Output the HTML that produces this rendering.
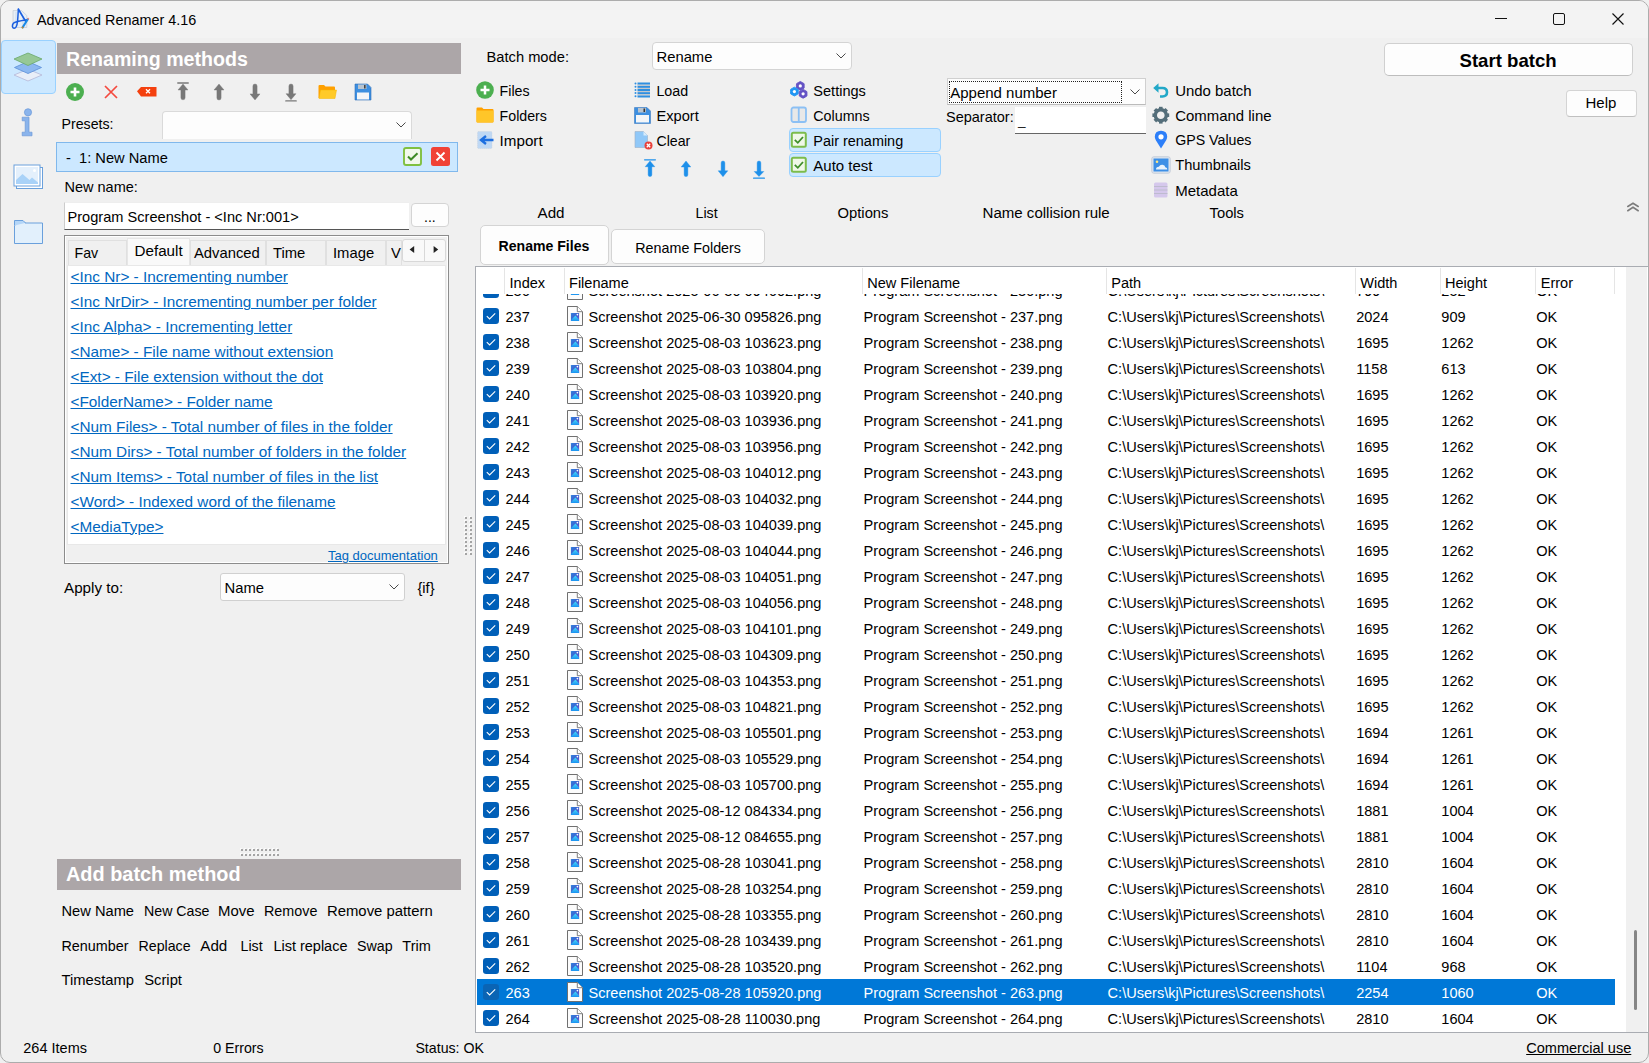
<!DOCTYPE html><html><head><meta charset="utf-8"><style>
*{margin:0;padding:0;box-sizing:border-box}
html,body{width:1649px;height:1063px;overflow:hidden;background:#f0f0f0}
body{font-family:"Liberation Sans",sans-serif;color:#000;position:relative}
.t{position:absolute;white-space:nowrap;line-height:1.117}
.r{position:absolute}
svg{position:absolute;overflow:visible}
.lnk{color:#0067c0;text-decoration:underline;text-decoration-thickness:1px;text-underline-offset:1px}
</style></head><body>
<div class="r" style="left:0px;top:0px;width:1649px;height:1063px;border:1px solid #acacac;border-radius:10px;background:#f0f0f0;overflow:hidden"></div>
<div class="r" style="left:1px;top:1px;width:1647px;height:37px;background:#f3f3f3;border-radius:9px 9px 0 0"></div>
<svg style="left:8px;top:6px;" width="26" height="26" viewBox="0 0 26 26"><path d="M5 4.6 H13.5 L18.8 9.5 V21.5 H5 Z" fill="#e8eff6" stroke="#c6ced8" stroke-width="0.8"/><path d="M8 6 V20 M15 10 V20" stroke="#d4e2f0" stroke-width="1.4"/><path d="M10.4 3.2 C10 8 9.9 12.5 9.5 15.5 C9.1 19.5 8.2 22.4 6 22.3 C4 22.2 3.9 19.2 5.4 17.3 C7 15.4 11.5 14.8 19.8 13.6" fill="none" stroke="#1b5fe0" stroke-width="1.5" stroke-linecap="round"/><path d="M10.4 3.2 L17.8 15.6" fill="none" stroke="#1b5fe0" stroke-width="1.7" stroke-linecap="round"/><path d="M20 13 L14.6 21.4" stroke="#1a8ae8" stroke-width="2" stroke-linecap="round"/><circle cx="14.5" cy="21.5" r="0.9" fill="#c88a20"/><circle cx="20.3" cy="12.7" r="0.9" fill="#f08a80"/></svg>
<div class="t" style="left:37px;top:12px;font-size:14.4px;line-height:16px;">Advanced Renamer 4.16</div>
<svg style="left:1490px;top:10px;" width="140" height="20" viewBox="0 0 140 20"><path d="M5 8.5 H17" stroke="#111" stroke-width="1"/>
<rect x="63.5" y="3.5" width="11" height="11" rx="1.5" fill="none" stroke="#111" stroke-width="1"/>
<path d="M122.5 3.5 L133.5 14.5 M133.5 3.5 L122.5 14.5" stroke="#111" stroke-width="1.15"/></svg>
<div class="r" style="left:1px;top:40px;width:55px;height:54px;background:#cce8ff;border:1px solid #99d1ff;border-radius:4px"></div>
<svg style="left:12px;top:50px;" width="32" height="34" viewBox="0 0 32 34"><path d="M2 25 L16 19.2 L30 25 L16 31 Z" fill="#e8eef8" stroke="#b4b8d8" stroke-width="0.8"/>
<path d="M2.5 17.5 L16 11.5 L29.5 17.5 L16 23.5 Z" fill="#8cb8f0" stroke="#5a8ed8" stroke-width="0.8"/>
<path d="M2 9 L16 3 L30 9 L16 15.5 Z" fill="#96c896" stroke="#6aa86a" stroke-width="0.8"/></svg>
<svg style="left:20px;top:106px;" width="16" height="32" viewBox="0 0 16 32"><circle cx="8" cy="6.3" r="3.6" fill="#8ab4ec" stroke="#6a98d8" stroke-width="0.7"/>
<path d="M2.2 11.2 H9 V26.2 H12 V29.8 H2.2 V26.2 H5.2 V14.8 H2.2 Z" fill="#8ab4ec" stroke="#6a98d8" stroke-width="0.7"/></svg>
<svg style="left:12px;top:163px;" width="32" height="28" viewBox="0 0 32 28"><rect x="4.5" y="4.5" width="26" height="21" fill="#fff" stroke="#6aa0dc" stroke-width="1"/>
<rect x="2" y="2" width="26" height="21" fill="#fff" stroke="#6aa0dc" stroke-width="1"/>
<rect x="4" y="4" width="22" height="17" fill="#e4f0fc"/>
<path d="M4 20 L4 17 L10.5 11 L17.5 17 L20 14.5 L26 19.5 L26 21 L4 21 Z" fill="#a9d2f8"/>
<circle cx="22.5" cy="7.5" r="1.5" fill="#fff"/></svg>
<svg style="left:12px;top:218px;" width="33" height="28" viewBox="0 0 33 28"><path d="M2.5 2.5 H11 L13.5 5 L13.5 7.5 H2.5 Z" fill="#b4d6f8" stroke="#6aa0dc" stroke-width="1"/>
<path d="M2.5 7.5 V25.5 H30.5 V5 H13 " fill="#e2f0fc" stroke="#6aa0dc" stroke-width="1"/></svg>
<div class="r" style="left:57px;top:43px;width:404px;height:31px;background:#aca6a8"></div>
<div class="t" style="left:66px;top:48px;font-size:19.6px;line-height:22px;color:#fff;font-weight:bold;">Renaming methods</div>
<svg style="left:64px;top:81px;" width="22" height="22" viewBox="0 0 22 22"><circle cx="11" cy="11" r="9" fill="#4caf50"/><path d="M11 6.5 V15.5 M6.5 11 H15.5" stroke="#fff" stroke-width="2.6"/></svg>
<svg style="left:103px;top:84px;" width="16" height="16" viewBox="0 0 16 16"><path d="M2 2 L14 14 M14 2 L2 14" stroke="#f44a3f" stroke-width="1.7"/></svg>
<svg style="left:136px;top:86px;" width="22" height="12" viewBox="0 0 22 12"><path d="M1 5.2 L5 1 H20.5 V10.5 H5 Z" fill="#f4400e"/><path d="M10 3.3 L14 7.3 M14 3.3 L10 7.3" stroke="#fff" stroke-width="1.3"/></svg>
<svg style="left:175px;top:79.9px;" width="16" height="23" viewBox="0 0 16 23"><path d="M8.00 4.00 L13.00 10.00 L10.10 10.00 L10.10 17.70 Q10.10 19.80 8.00 19.80 Q5.90 19.80 5.90 17.70 L5.90 10.00 L3.00 10.00 Z" fill="#787878" stroke="#787878" stroke-width="0.4" stroke-linejoin="round"/><path d="M2.80 2.90 H13.20" stroke="#787878" stroke-width="1.5" stroke-linecap="round"/></svg>
<svg style="left:211px;top:79.7px;" width="16" height="24" viewBox="0 0 16 24"><path d="M8.00 4.00 L13.00 10.00 L10.10 10.00 L10.10 17.90 Q10.10 20.00 8.00 20.00 Q5.90 20.00 5.90 17.90 L5.90 10.00 L3.00 10.00 Z" fill="#787878" stroke="#787878" stroke-width="0.4" stroke-linejoin="round"/></svg>
<svg style="left:247px;top:80.3px;" width="16" height="23" viewBox="0 0 16 23"><path d="M8.00 19.90 L13.00 13.90 L10.10 13.90 L10.10 6.10 Q10.10 4.00 8.00 4.00 Q5.90 4.00 5.90 6.10 L5.90 13.90 L3.00 13.90 Z" fill="#787878" stroke="#787878" stroke-width="0.4" stroke-linejoin="round"/></svg>
<svg style="left:283px;top:80.3px;" width="16" height="23" viewBox="0 0 16 23"><path d="M8.00 19.70 L13.00 13.70 L10.10 13.70 L10.10 6.10 Q10.10 4.00 8.00 4.00 Q5.90 4.00 5.90 6.10 L5.90 13.70 L3.00 13.70 Z" fill="#787878" stroke="#787878" stroke-width="0.4" stroke-linejoin="round"/><path d="M2.80 20.90 H13.20" stroke="#787878" stroke-width="1.3" stroke-linecap="round"/></svg>
<svg style="left:318px;top:84px;" width="20" height="16" viewBox="0 0 20 16"><path d="M0.5 2 Q0.5 1 1.5 1 H6 L7.5 2.5 H16 Q17 2.5 17 3.5 V14 H0.5 Z" fill="#ffa000"/><path d="M2.5 6 H18.5 L17 14.5 H1 Z" fill="#ffca28" stroke="#f5b400" stroke-width="0.5"/></svg>
<svg style="left:354px;top:83px;" width="18" height="18" viewBox="0 0 18 18"><path d="M1 1 H13.5 L17 4.5 V17 H1 Z" fill="#3d8fe0" stroke="#2f6fb8" stroke-width="0.6"/><rect x="4" y="1.5" width="8.5" height="4.5" fill="#b8c4d0"/><rect x="10" y="2" width="1.6" height="3.5" fill="#444"/><rect x="3" y="9.5" width="12" height="7" fill="#f4f6f8"/></svg>
<div class="t" style="left:61.5px;top:116px;font-size:14.2px;line-height:16px;">Presets:</div>
<div class="r" style="left:162px;top:111px;width:250px;height:28px;background:#fdfdfd;border:1px solid #dadada;border-bottom:none;border-radius:4px 4px 0 0"></div>
<svg style="left:395px;top:121px;" width="12" height="8" viewBox="0 0 12 8"><path d="M1.5 1.5 L6 6 L10.5 1.5" fill="none" stroke="#4a4a4a" stroke-width="1"/></svg>
<div class="r" style="left:56px;top:142px;width:402px;height:30px;background:#cce8ff;border:1px solid #80b8ec"></div>
<div class="t" style="left:66px;top:150px;font-size:14.67px;line-height:16px;">-&nbsp;&nbsp;1: New Name</div>
<svg style="left:402px;top:146px;" width="22" height="22" viewBox="0 0 22 22"><rect x="2" y="2" width="17" height="17" rx="2" fill="#f2f8ec" stroke="#80c040" stroke-width="1.9"/><path d="M6 10.5 L9 13.5 L15.5 7.2" fill="none" stroke="#3e8a26" stroke-width="2"/></svg>
<svg style="left:430px;top:146px;" width="22" height="22" viewBox="0 0 22 22"><rect x="1" y="1" width="19" height="19" rx="2.5" fill="#f04236"/><path d="M6.5 6.5 L14.5 14.5 M14.5 6.5 L6.5 14.5" stroke="#fff" stroke-width="1.8"/></svg>
<div class="t" style="left:64.5px;top:179px;font-size:14.51px;line-height:16px;">New name:</div>
<div class="r" style="left:64px;top:202px;width:345px;height:28px;background:#fff;border-bottom:1px solid #555;border-left:1px solid #ccc;border-top:1px solid #eee"></div>
<div class="t" style="left:67.5px;top:209px;font-size:14.6px;line-height:16px;">Program Screenshot - &lt;Inc Nr:001&gt;</div>
<div class="r" style="left:411px;top:203px;width:38px;height:24px;background:#fdfdfd;border:1px solid #d4d4d4;border-radius:4px"></div>
<div class="t" style="left:424px;top:209px;font-size:14px;line-height:16px;">...</div>
<div class="r" style="left:64px;top:235px;width:385px;height:329px;border:1px solid #8c8c8c;background:#f0f0f0"></div>
<div class="r" style="left:65px;top:236px;width:383px;height:327px;border:1px solid #fff;"></div>
<div class="r" style="left:68px;top:239.5px;width:59px;height:25.5px;background:#f0f0f0;border:1px solid #e0e0e0;border-bottom:none"></div>
<div class="t" style="left:74.5px;top:245px;font-size:14.2px;line-height:16px;">Fav</div>
<div class="r" style="left:127px;top:238px;width:63px;height:27px;background:#f9f9f9;border:1px solid #e6e6e6;border-bottom:none"></div>
<div class="t" style="left:134.5px;top:242px;font-size:15.2px;line-height:17px;">Default</div>
<div class="r" style="left:190px;top:239.5px;width:76px;height:25.5px;background:#f0f0f0;border:1px solid #e0e0e0;border-bottom:none"></div>
<div class="t" style="left:194px;top:245px;font-size:14.8px;line-height:16px;">Advanced</div>
<div class="r" style="left:266px;top:239.5px;width:60px;height:25.5px;background:#f0f0f0;border:1px solid #e0e0e0;border-bottom:none"></div>
<div class="t" style="left:273px;top:245px;font-size:14.8px;line-height:16px;">Time</div>
<div class="r" style="left:326px;top:239.5px;width:60px;height:25.5px;background:#f0f0f0;border:1px solid #e0e0e0;border-bottom:none"></div>
<div class="t" style="left:333px;top:245px;font-size:14.8px;line-height:16px;">Image</div>
<div class="r" style="left:386px;top:239.5px;width:16px;height:25.5px;background:#f0f0f0;border:1px solid #e0e0e0;border-bottom:none"></div>
<div class="t" style="left:391px;top:245px;font-size:14.8px;line-height:16px;overflow:hidden;width:11px;">V</div>
<div class="r" style="left:402px;top:239px;width:44px;height:23px;background:#f9f9f9;border:1px solid #d8d8d8;border-radius:3px"></div>
<div class="r" style="left:424px;top:239px;width:1px;height:22px;background:#d8d8d8"></div>
<svg style="left:402px;top:239px;" width="44" height="22" viewBox="0 0 44 22"><path d="M12.2 7 L7.6 10.5 L12.2 14 Z" fill="#222"/><path d="M31.6 7 L36.2 10.5 L31.6 14 Z" fill="#222"/></svg>
<div class="r" style="left:67px;top:265px;width:379px;height:280px;background:#fff;border:1px solid #e8e8e8"></div>
<div class="t lnk" style="left:70.5px;top:268px;font-size:15.35px;line-height:17px;">&lt;Inc Nr&gt; - Incrementing number</div>
<div class="t lnk" style="left:70.5px;top:293px;font-size:15.35px;line-height:17px;">&lt;Inc NrDir&gt; - Incrementing number per folder</div>
<div class="t lnk" style="left:70.5px;top:318px;font-size:15.35px;line-height:17px;">&lt;Inc Alpha&gt; - Incrementing letter</div>
<div class="t lnk" style="left:70.5px;top:343px;font-size:15.35px;line-height:17px;">&lt;Name&gt; - File name without extension</div>
<div class="t lnk" style="left:70.5px;top:368px;font-size:15.35px;line-height:17px;">&lt;Ext&gt; - File extension without the dot</div>
<div class="t lnk" style="left:70.5px;top:393px;font-size:15.35px;line-height:17px;">&lt;FolderName&gt; - Folder name</div>
<div class="t lnk" style="left:70.5px;top:418px;font-size:15.35px;line-height:17px;">&lt;Num Files&gt; - Total number of files in the folder</div>
<div class="t lnk" style="left:70.5px;top:443px;font-size:15.35px;line-height:17px;">&lt;Num Dirs&gt; - Total number of folders in the folder</div>
<div class="t lnk" style="left:70.5px;top:468px;font-size:15.35px;line-height:17px;">&lt;Num Items&gt; - Total number of files in the list</div>
<div class="t lnk" style="left:70.5px;top:493px;font-size:15.35px;line-height:17px;">&lt;Word&gt; - Indexed word of the filename</div>
<div class="t lnk" style="left:70.5px;top:518px;font-size:15.35px;line-height:17px;">&lt;MediaType&gt;</div>
<div class="t lnk" style="left:328px;top:548px;font-size:13px;line-height:15px;">Tag documentation</div>
<div class="t" style="left:64px;top:579px;font-size:15.2px;line-height:17px;">Apply to:</div>
<div class="r" style="left:220px;top:573px;width:185px;height:28px;background:#fdfdfd;border:1px solid #d0d0d0;border-radius:3px"></div>
<div class="t" style="left:224.5px;top:580px;font-size:14.8px;line-height:16px;">Name</div>
<svg style="left:388px;top:583px;" width="12" height="8" viewBox="0 0 12 8"><path d="M1.5 1.5 L6 6 L10.5 1.5" fill="none" stroke="#4a4a4a" stroke-width="1"/></svg>
<div class="t" style="left:417.5px;top:580px;font-size:14.6px;line-height:16px;">{if}</div>
<div class="r" style="left:464px;top:516px;width:2px;height:2px;background:#fbfbfb"></div><div class="r" style="left:465px;top:517px;width:2px;height:2px;background:#a4a4a4"></div><div class="r" style="left:469px;top:516px;width:2px;height:2px;background:#fbfbfb"></div><div class="r" style="left:470px;top:517px;width:2px;height:2px;background:#a4a4a4"></div><div class="r" style="left:464px;top:520px;width:2px;height:2px;background:#fbfbfb"></div><div class="r" style="left:465px;top:521px;width:2px;height:2px;background:#a4a4a4"></div><div class="r" style="left:469px;top:520px;width:2px;height:2px;background:#fbfbfb"></div><div class="r" style="left:470px;top:521px;width:2px;height:2px;background:#a4a4a4"></div><div class="r" style="left:464px;top:524px;width:2px;height:2px;background:#fbfbfb"></div><div class="r" style="left:465px;top:525px;width:2px;height:2px;background:#a4a4a4"></div><div class="r" style="left:469px;top:524px;width:2px;height:2px;background:#fbfbfb"></div><div class="r" style="left:470px;top:525px;width:2px;height:2px;background:#a4a4a4"></div><div class="r" style="left:464px;top:528px;width:2px;height:2px;background:#fbfbfb"></div><div class="r" style="left:465px;top:529px;width:2px;height:2px;background:#a4a4a4"></div><div class="r" style="left:469px;top:528px;width:2px;height:2px;background:#fbfbfb"></div><div class="r" style="left:470px;top:529px;width:2px;height:2px;background:#a4a4a4"></div><div class="r" style="left:464px;top:532px;width:2px;height:2px;background:#fbfbfb"></div><div class="r" style="left:465px;top:533px;width:2px;height:2px;background:#a4a4a4"></div><div class="r" style="left:469px;top:532px;width:2px;height:2px;background:#fbfbfb"></div><div class="r" style="left:470px;top:533px;width:2px;height:2px;background:#a4a4a4"></div><div class="r" style="left:464px;top:536px;width:2px;height:2px;background:#fbfbfb"></div><div class="r" style="left:465px;top:537px;width:2px;height:2px;background:#a4a4a4"></div><div class="r" style="left:469px;top:536px;width:2px;height:2px;background:#fbfbfb"></div><div class="r" style="left:470px;top:537px;width:2px;height:2px;background:#a4a4a4"></div><div class="r" style="left:464px;top:540px;width:2px;height:2px;background:#fbfbfb"></div><div class="r" style="left:465px;top:541px;width:2px;height:2px;background:#a4a4a4"></div><div class="r" style="left:469px;top:540px;width:2px;height:2px;background:#fbfbfb"></div><div class="r" style="left:470px;top:541px;width:2px;height:2px;background:#a4a4a4"></div><div class="r" style="left:464px;top:544px;width:2px;height:2px;background:#fbfbfb"></div><div class="r" style="left:465px;top:545px;width:2px;height:2px;background:#a4a4a4"></div><div class="r" style="left:469px;top:544px;width:2px;height:2px;background:#fbfbfb"></div><div class="r" style="left:470px;top:545px;width:2px;height:2px;background:#a4a4a4"></div><div class="r" style="left:464px;top:548px;width:2px;height:2px;background:#fbfbfb"></div><div class="r" style="left:465px;top:549px;width:2px;height:2px;background:#a4a4a4"></div><div class="r" style="left:469px;top:548px;width:2px;height:2px;background:#fbfbfb"></div><div class="r" style="left:470px;top:549px;width:2px;height:2px;background:#a4a4a4"></div><div class="r" style="left:464px;top:552px;width:2px;height:2px;background:#fbfbfb"></div><div class="r" style="left:465px;top:553px;width:2px;height:2px;background:#a4a4a4"></div><div class="r" style="left:469px;top:552px;width:2px;height:2px;background:#fbfbfb"></div><div class="r" style="left:470px;top:553px;width:2px;height:2px;background:#a4a4a4"></div>
<div class="r" style="left:240px;top:848px;width:2px;height:2px;background:#fbfbfb"></div><div class="r" style="left:241px;top:849px;width:2px;height:2px;background:#a4a4a4"></div><div class="r" style="left:240px;top:853px;width:2px;height:2px;background:#fbfbfb"></div><div class="r" style="left:241px;top:854px;width:2px;height:2px;background:#a4a4a4"></div><div class="r" style="left:244px;top:848px;width:2px;height:2px;background:#fbfbfb"></div><div class="r" style="left:245px;top:849px;width:2px;height:2px;background:#a4a4a4"></div><div class="r" style="left:244px;top:853px;width:2px;height:2px;background:#fbfbfb"></div><div class="r" style="left:245px;top:854px;width:2px;height:2px;background:#a4a4a4"></div><div class="r" style="left:248px;top:848px;width:2px;height:2px;background:#fbfbfb"></div><div class="r" style="left:249px;top:849px;width:2px;height:2px;background:#a4a4a4"></div><div class="r" style="left:248px;top:853px;width:2px;height:2px;background:#fbfbfb"></div><div class="r" style="left:249px;top:854px;width:2px;height:2px;background:#a4a4a4"></div><div class="r" style="left:252px;top:848px;width:2px;height:2px;background:#fbfbfb"></div><div class="r" style="left:253px;top:849px;width:2px;height:2px;background:#a4a4a4"></div><div class="r" style="left:252px;top:853px;width:2px;height:2px;background:#fbfbfb"></div><div class="r" style="left:253px;top:854px;width:2px;height:2px;background:#a4a4a4"></div><div class="r" style="left:256px;top:848px;width:2px;height:2px;background:#fbfbfb"></div><div class="r" style="left:257px;top:849px;width:2px;height:2px;background:#a4a4a4"></div><div class="r" style="left:256px;top:853px;width:2px;height:2px;background:#fbfbfb"></div><div class="r" style="left:257px;top:854px;width:2px;height:2px;background:#a4a4a4"></div><div class="r" style="left:260px;top:848px;width:2px;height:2px;background:#fbfbfb"></div><div class="r" style="left:261px;top:849px;width:2px;height:2px;background:#a4a4a4"></div><div class="r" style="left:260px;top:853px;width:2px;height:2px;background:#fbfbfb"></div><div class="r" style="left:261px;top:854px;width:2px;height:2px;background:#a4a4a4"></div><div class="r" style="left:264px;top:848px;width:2px;height:2px;background:#fbfbfb"></div><div class="r" style="left:265px;top:849px;width:2px;height:2px;background:#a4a4a4"></div><div class="r" style="left:264px;top:853px;width:2px;height:2px;background:#fbfbfb"></div><div class="r" style="left:265px;top:854px;width:2px;height:2px;background:#a4a4a4"></div><div class="r" style="left:268px;top:848px;width:2px;height:2px;background:#fbfbfb"></div><div class="r" style="left:269px;top:849px;width:2px;height:2px;background:#a4a4a4"></div><div class="r" style="left:268px;top:853px;width:2px;height:2px;background:#fbfbfb"></div><div class="r" style="left:269px;top:854px;width:2px;height:2px;background:#a4a4a4"></div><div class="r" style="left:272px;top:848px;width:2px;height:2px;background:#fbfbfb"></div><div class="r" style="left:273px;top:849px;width:2px;height:2px;background:#a4a4a4"></div><div class="r" style="left:272px;top:853px;width:2px;height:2px;background:#fbfbfb"></div><div class="r" style="left:273px;top:854px;width:2px;height:2px;background:#a4a4a4"></div><div class="r" style="left:276px;top:848px;width:2px;height:2px;background:#fbfbfb"></div><div class="r" style="left:277px;top:849px;width:2px;height:2px;background:#a4a4a4"></div><div class="r" style="left:276px;top:853px;width:2px;height:2px;background:#fbfbfb"></div><div class="r" style="left:277px;top:854px;width:2px;height:2px;background:#a4a4a4"></div>
<div class="r" style="left:57px;top:859px;width:404px;height:31px;background:#aca6a8"></div>
<div class="t" style="left:66px;top:863px;font-size:19.9px;line-height:22px;color:#fff;font-weight:bold;">Add batch method</div>
<div class="t" style="left:61.5px;top:903px;font-size:14.66px;line-height:16px;">New Name</div>
<div class="t" style="left:144px;top:903px;font-size:14.2px;line-height:16px;">New Case</div>
<div class="t" style="left:218px;top:902px;font-size:14.93px;line-height:17px;">Move</div>
<div class="t" style="left:264px;top:903px;font-size:14.34px;line-height:16px;">Remove</div>
<div class="t" style="left:327px;top:903px;font-size:14.87px;line-height:16px;">Remove pattern</div>
<div class="t" style="left:61.5px;top:938px;font-size:14.35px;line-height:16px;">Renumber</div>
<div class="t" style="left:138.5px;top:938px;font-size:14.2px;line-height:16px;">Replace</div>
<div class="t" style="left:200.3px;top:937px;font-size:15.2px;line-height:17px;">Add</div>
<div class="t" style="left:240.5px;top:938px;font-size:14.2px;line-height:16px;">List</div>
<div class="t" style="left:273.4px;top:938px;font-size:14.49px;line-height:16px;">List replace</div>
<div class="t" style="left:357px;top:938px;font-size:14.24px;line-height:16px;">Swap</div>
<div class="t" style="left:402.3px;top:938px;font-size:14.54px;line-height:16px;">Trim</div>
<div class="t" style="left:61.5px;top:972px;font-size:14.77px;line-height:16px;">Timestamp</div>
<div class="t" style="left:144.2px;top:972px;font-size:14.79px;line-height:16px;">Script</div>
<div class="t" style="left:23.3px;top:1040px;font-size:14.51px;line-height:16px;">264 Items</div>
<div class="t" style="left:213.2px;top:1040px;font-size:14.2px;line-height:16px;">0 Errors</div>
<div class="t" style="left:415.4px;top:1040px;font-size:14.2px;line-height:16px;">Status: OK</div>
<div class="t" style="left:1526.2px;top:1040px;font-size:14.56px;line-height:16px;text-decoration:underline;text-decoration-thickness:1px;text-underline-offset:1px;">Commercial use</div>
<div class="t" style="left:486.5px;top:49px;font-size:14.7px;line-height:16px;">Batch mode:</div>
<div class="r" style="left:652px;top:42px;width:200px;height:28px;background:#fdfdfd;border:1px solid #d4d4d4;border-radius:4px"></div>
<div class="t" style="left:656.5px;top:49px;font-size:14.8px;line-height:16px;">Rename</div>
<svg style="left:835px;top:52px;" width="12" height="8" viewBox="0 0 12 8"><path d="M1.5 1.5 L6 6 L10.5 1.5" fill="none" stroke="#4a4a4a" stroke-width="1"/></svg>
<svg style="left:475px;top:80px;" width="20" height="20" viewBox="0 0 20 20"><circle cx="10" cy="10" r="8.8" fill="#4caf50"/><path d="M10 5.5 V14.5 M5.5 10 H14.5" stroke="#fff" stroke-width="2.5"/></svg>
<div class="t" style="left:499.6px;top:83px;font-size:14.2px;line-height:16px;">Files</div>
<svg style="left:476px;top:107px;" width="18" height="16" viewBox="0 0 18 16"><path d="M0.5 1.5 Q0.5 0.5 1.5 0.5 H6 L7.5 2 H16.5 Q17.5 2 17.5 3 V14.5 Q17.5 15.5 16.5 15.5 H1.5 Q0.5 15.5 0.5 14.5 Z" fill="#ffa000"/><path d="M0.5 3.5 H17.5 V14.5 Q17.5 15.5 16.5 15.5 H1.5 Q0.5 15.5 0.5 14.5 Z" fill="#ffc629"/></svg>
<div class="t" style="left:499.6px;top:108px;font-size:14.2px;line-height:16px;">Folders</div>
<svg style="left:477px;top:131px;" width="17" height="18" viewBox="0 0 17 18"><rect x="0.5" y="0.5" width="14.5" height="17" rx="1" fill="#bfd8f4" stroke="#c8d0dc" stroke-width="0.6" stroke-dasharray="1 1"/><path d="M16.5 9 H5.5 M9 5 L4 9 L9 13" fill="none" stroke="#1e6fe0" stroke-width="2.4" stroke-linejoin="miter"/></svg>
<div class="t" style="left:499.6px;top:132px;font-size:15.2px;line-height:17px;">Import</div>
<div class="t" style="left:537.5px;top:204px;font-size:15.2px;line-height:17px;">Add</div>
<svg style="left:634px;top:82px;" width="17" height="17" viewBox="0 0 17 17"><rect x="0.5" y="0.5" width="2" height="2" rx="1" fill="#2f8fe0"/><rect x="3.5" y="0.5" width="12.5" height="2.2" fill="#2f8fe0"/><rect x="0.5" y="3.7" width="2" height="2" rx="1" fill="#2f8fe0"/><rect x="3.5" y="3.7" width="12.5" height="2.2" fill="#2f8fe0"/><rect x="0.5" y="6.9" width="2" height="2" rx="1" fill="#2f8fe0"/><rect x="3.5" y="6.9" width="12.5" height="2.2" fill="#2f8fe0"/><rect x="0.5" y="10.100000000000001" width="2" height="2" rx="1" fill="#2f8fe0"/><rect x="3.5" y="10.100000000000001" width="12.5" height="2.2" fill="#2f8fe0"/><rect x="0.5" y="13.3" width="2" height="2" rx="1" fill="#2f8fe0"/><rect x="3.5" y="13.3" width="12.5" height="2.2" fill="#2f8fe0"/><rect x="3.5" y="2.7" width="12.5" height="1" fill="#c0c4c8"/><rect x="3.5" y="5.9" width="12.5" height="1" fill="#c0c4c8"/><rect x="3.5" y="9.100000000000001" width="12.5" height="1" fill="#c0c4c8"/><rect x="3.5" y="12.3" width="12.5" height="1" fill="#c0c4c8"/></svg>
<div class="t" style="left:656.4px;top:83px;font-size:14.29px;line-height:16px;">Load</div>
<svg style="left:634px;top:107px;" width="17" height="17" viewBox="0 0 17 17"><path d="M0.5 0.5 H13 L16.5 4 V16.5 H0.5 Z" fill="#3d8fe0" stroke="#2f6fb8" stroke-width="0.5"/><rect x="4" y="1" width="8" height="4.5" fill="#b8c4d0"/><rect x="9.5" y="1.5" width="1.6" height="3.5" fill="#333"/><rect x="2" y="8" width="13" height="7.5" fill="#f4f6f8"/></svg>
<div class="t" style="left:656.4px;top:108px;font-size:14.67px;line-height:16px;">Export</div>
<svg style="left:634px;top:130px;" width="20" height="21" viewBox="0 0 20 21"><path d="M1 1.5 H9.5 L13.5 5.5 V17.5 H1 Z" fill="#90c8f8" stroke="#9ab0c8" stroke-width="0.6"/><path d="M9.5 1.5 V5.5 H13.5" fill="#d8ecfc"/><circle cx="14.5" cy="15.5" r="4" fill="#e8403a"/><path d="M12.8 13.8 L16.2 17.2 M16.2 13.8 L12.8 17.2" stroke="#fff" stroke-width="1.3"/></svg>
<div class="t" style="left:656.4px;top:133px;font-size:14.2px;line-height:16px;">Clear</div>
<svg style="left:642px;top:156.8px;" width="16" height="23" viewBox="0 0 16 23"><path d="M8.00 4.00 L12.80 9.70 L9.85 9.70 L9.85 17.65 Q9.85 19.50 8.00 19.50 Q6.15 19.50 6.15 17.65 L6.15 9.70 L3.20 9.70 Z" fill="#1e90ea" stroke="#1e90ea" stroke-width="0.4" stroke-linejoin="round"/><path d="M2.60 2.80 H13.40" stroke="#1e90ea" stroke-width="1.3" stroke-linecap="round"/></svg>
<svg style="left:678px;top:156.7px;" width="16" height="23" viewBox="0 0 16 23"><path d="M8.00 4.00 L12.80 10.00 L9.85 10.00 L9.85 17.75 Q9.85 19.60 8.00 19.60 Q6.15 19.60 6.15 17.75 L6.15 10.00 L3.20 10.00 Z" fill="#1e90ea" stroke="#1e90ea" stroke-width="0.4" stroke-linejoin="round"/></svg>
<svg style="left:715px;top:157.2px;" width="16" height="23" viewBox="0 0 16 23"><path d="M8.00 19.70 L12.80 13.80 L9.85 13.80 L9.85 5.85 Q9.85 4.00 8.00 4.00 Q6.15 4.00 6.15 5.85 L6.15 13.80 L3.20 13.80 Z" fill="#1e90ea" stroke="#1e90ea" stroke-width="0.4" stroke-linejoin="round"/></svg>
<svg style="left:751px;top:157.2px;" width="16" height="23" viewBox="0 0 16 23"><path d="M8.00 19.50 L12.80 14.50 L9.85 14.50 L9.85 5.85 Q9.85 4.00 8.00 4.00 Q6.15 4.00 6.15 5.85 L6.15 14.50 L3.20 14.50 Z" fill="#1e90ea" stroke="#1e90ea" stroke-width="0.4" stroke-linejoin="round"/><path d="M2.60 21.20 H13.40" stroke="#1e90ea" stroke-width="1.2" stroke-linecap="round"/></svg>
<div class="t" style="left:695.5px;top:205px;font-size:14.2px;line-height:16px;">List</div>
<svg style="left:789px;top:80px;" width="20" height="20" viewBox="0 0 20 20"><polygon points="11.30,10.30 9.35,9.28 7.49,8.10 7.40,5.90 7.49,3.70 9.35,2.52 11.30,1.50 13.25,2.52 15.11,3.70 15.20,5.90 15.11,8.10 13.25,9.28" fill="#6452c4" stroke="#6452c4" stroke-width="0.9" stroke-linejoin="round"/><circle cx="11.3" cy="5.9" r="1.6" fill="#fff"/><polygon points="5.40,16.00 3.45,14.98 1.59,13.80 1.50,11.60 1.59,9.40 3.45,8.22 5.40,7.20 7.35,8.22 9.21,9.40 9.30,11.60 9.21,13.80 7.35,14.98" fill="#2196f3" stroke="#2196f3" stroke-width="0.9" stroke-linejoin="round"/><circle cx="5.4" cy="11.6" r="1.6" fill="#fff"/><polygon points="14.10,18.20 12.15,17.18 10.29,16.00 10.20,13.80 10.29,11.60 12.15,10.42 14.10,9.40 16.05,10.42 17.91,11.60 18.00,13.80 17.91,16.00 16.05,17.18" fill="#6452c4" stroke="#6452c4" stroke-width="0.9" stroke-linejoin="round"/><circle cx="14.1" cy="13.8" r="1.6" fill="#fff"/></svg>
<div class="t" style="left:813.3px;top:83px;font-size:14.55px;line-height:16px;">Settings</div>
<svg style="left:790px;top:106px;" width="18" height="18" viewBox="0 0 18 18"><rect x="1.5" y="1.5" width="14.5" height="14.5" rx="2" fill="#e8e8e8" stroke="#8cc0f4" stroke-width="1.8"/><path d="M8.75 2 V16" stroke="#8cc0f4" stroke-width="1.8"/></svg>
<div class="t" style="left:813.3px;top:108px;font-size:14.3px;line-height:16px;">Columns</div>
<div class="r" style="left:789px;top:128px;width:152px;height:24px;background:#cce8ff;border:1px solid #99d1ff;border-radius:4px"></div>
<div class="r" style="left:789px;top:153px;width:152px;height:24px;background:#cce8ff;border:1px solid #99d1ff;border-radius:4px"></div>
<svg style="left:790px;top:131px;" width="18" height="18" viewBox="0 0 18 18"><rect x="1.8" y="1.8" width="14" height="14" rx="1.5" fill="#f0f8e8" stroke="#7cbc4c" stroke-width="2"/><path d="M4.8 8.8 L7.8 11.8 L13 6" fill="none" stroke="#3e8e2a" stroke-width="1.8"/></svg>
<svg style="left:790px;top:156px;" width="18" height="18" viewBox="0 0 18 18"><rect x="1.8" y="1.8" width="14" height="14" rx="1.5" fill="#f0f8e8" stroke="#7cbc4c" stroke-width="2"/><path d="M4.8 8.8 L7.8 11.8 L13 6" fill="none" stroke="#3e8e2a" stroke-width="1.8"/></svg>
<div class="t" style="left:813.3px;top:133px;font-size:14.44px;line-height:16px;">Pair renaming</div>
<div class="t" style="left:813.3px;top:157px;font-size:15.0px;line-height:17px;">Auto test</div>
<div class="t" style="left:837.5px;top:205px;font-size:14.8px;line-height:16px;">Options</div>
<div class="r" style="left:947px;top:78px;width:199px;height:27px;background:#fdfdfd;border:1px solid #d0d0d0;border-bottom-color:#bbb"></div>
<div class="r" style="left:949px;top:81px;width:173px;height:22px;border:1px dotted #222"></div>
<div class="t" style="left:950.2px;top:84px;font-size:15.0px;line-height:17px;">Append number</div>
<svg style="left:1129px;top:88px;" width="12" height="8" viewBox="0 0 12 8"><path d="M1.5 1.5 L6 6 L10.5 1.5" fill="none" stroke="#4a4a4a" stroke-width="1"/></svg>
<div class="t" style="left:946px;top:109px;font-size:14.5px;line-height:16px;">Separator:</div>
<div class="r" style="left:1015px;top:106px;width:131px;height:28px;background:#fff;border-bottom:1px solid #666;border-top:1px solid #eee"></div>
<div class="t" style="left:1018px;top:113px;font-size:13.5px;line-height:15px;">_</div>
<div class="t" style="left:982.5px;top:204px;font-size:15.07px;line-height:17px;">Name collision rule</div>
<svg style="left:1152px;top:82px;" width="18" height="16" viewBox="0 0 18 16"><path d="M4.5 6 H10.5 Q15 6 15 10.2 Q15 14.5 10.5 14.5 H8" fill="none" stroke="#22a8c8" stroke-width="2.6"/><path d="M1.2 6 L6.5 1.2 L6.5 10.8 Z" fill="#22a8c8"/></svg>
<div class="t" style="left:1175.2px;top:82px;font-size:14.94px;line-height:17px;">Undo batch</div>
<svg style="left:1151px;top:106px;" width="20" height="19" viewBox="0 0 20 19"><g transform="translate(9.8,9.2)"><circle r="5.5" fill="none" stroke="#546e7a" stroke-width="3.4"/><rect x="-1.8" y="-8.4" width="3.6" height="3.6" fill="#546e7a" transform="rotate(0)"/><rect x="-1.8" y="-8.4" width="3.6" height="3.6" fill="#546e7a" transform="rotate(45)"/><rect x="-1.8" y="-8.4" width="3.6" height="3.6" fill="#546e7a" transform="rotate(90)"/><rect x="-1.8" y="-8.4" width="3.6" height="3.6" fill="#546e7a" transform="rotate(135)"/><rect x="-1.8" y="-8.4" width="3.6" height="3.6" fill="#546e7a" transform="rotate(180)"/><rect x="-1.8" y="-8.4" width="3.6" height="3.6" fill="#546e7a" transform="rotate(225)"/><rect x="-1.8" y="-8.4" width="3.6" height="3.6" fill="#546e7a" transform="rotate(270)"/><rect x="-1.8" y="-8.4" width="3.6" height="3.6" fill="#546e7a" transform="rotate(315)"/></g></svg>
<div class="t" style="left:1175.2px;top:107px;font-size:14.95px;line-height:17px;">Command line</div>
<svg style="left:1154px;top:130px;" width="14" height="19" viewBox="0 0 14 19"><path d="M7 18.5 L2 10.5 Q0.8 8.5 0.8 6.8 Q0.8 0.8 7 0.8 Q13.2 0.8 13.2 6.8 Q13.2 8.5 12 10.5 Z" fill="#2d7ff9"/><circle cx="7" cy="6.8" r="2.6" fill="#fff"/></svg>
<div class="t" style="left:1175.2px;top:132px;font-size:14.2px;line-height:16px;">GPS Values</div>
<svg style="left:1151px;top:156px;" width="20" height="18" viewBox="0 0 20 18"><rect x="0.8" y="0.8" width="18.4" height="16.4" rx="2" fill="#dfe6f0" stroke="#c4ccd8" stroke-width="1"/><rect x="2.5" y="2.5" width="15" height="13" fill="#3d8fe6"/><circle cx="6" cy="5.8" r="1.3" fill="#ffe680"/><path d="M5 13.5 Q5 10.8 7.8 10.8 Q9 8.5 11.5 8.8 Q14 9 14.3 11.2 Q16.5 11.5 16.3 13.5 Z" fill="#e8f2fc"/></svg>
<div class="t" style="left:1175.2px;top:157px;font-size:14.66px;line-height:16px;">Thumbnails</div>
<svg style="left:1153px;top:182px;" width="16" height="16" viewBox="0 0 16 16"><rect x="1" y="0.5" width="13.5" height="15" rx="1.5" fill="#d5c8ec"/><path d="M1 4.5 H14.5 M1 8 H14.5 M1 11.5 H14.5" stroke="#b8b8c8" stroke-width="0.8"/></svg>
<div class="t" style="left:1175.2px;top:182px;font-size:15.0px;line-height:17px;">Metadata</div>
<div class="t" style="left:1209.6px;top:205px;font-size:14.73px;line-height:16px;">Tools</div>
<svg style="left:1625px;top:199px;" width="16" height="14" viewBox="0 0 16 14"><path d="M2.8 7.5 L8 4.2 L13.2 7.5 M2.8 11.75 L8 8.3 L13.2 11.75" fill="none" stroke="#7c7c7c" stroke-width="1.6" stroke-linecap="round"/></svg>
<div class="r" style="left:1384px;top:43px;width:249px;height:33px;background:#fdfdfd;border:1px solid #d0d0d0;border-bottom-color:#bdbdbd;border-radius:5px"></div>
<div class="t" style="left:1459.5px;top:50px;font-size:18.6px;line-height:21px;font-weight:bold;">Start batch</div>
<div class="r" style="left:1566px;top:90px;width:71px;height:27px;background:#fdfdfd;border:1px solid #d4d4d4;border-bottom-color:#c0c0c0;border-radius:4px"></div>
<div class="t" style="left:1585.5px;top:94px;font-size:14.99px;line-height:17px;">Help</div>
<div class="r" style="left:480px;top:225px;width:129px;height:40px;background:#fdfdfd;border:1px solid #d4d4d4;border-radius:5px"></div>
<div class="t" style="left:498.5px;top:238px;font-size:14.1px;line-height:16px;font-weight:bold;">Rename Files</div>
<div class="r" style="left:611px;top:229px;width:154px;height:35px;background:#fdfdfd;border:1px solid #d4d4d4;border-radius:5px"></div>
<div class="t" style="left:635.3px;top:240px;font-size:14.3px;line-height:16px;">Rename Folders</div>
<div class="r" style="left:475px;top:266px;width:1173px;height:767px;background:#fff;border:1px solid #a9acb2;border-right:none"></div>
<div class="r" style="left:476px;top:294px;width:1150px;height:738px;overflow:hidden">
<svg style="left:7px;top:-12px" width="16" height="16" viewBox="0 0 16 16"><rect x="0" y="0" width="16" height="16" rx="3.2" fill="#005fb8"/><path d="M3.8 8.2 L6.6 11 L12.2 5.4" fill="none" stroke="#fff" stroke-width="1.1"/></svg>
<div class="t" style="left:29.50px;top:-11px;font-size:14.55px;line-height:16px;">236</div>
<svg style="left:91px;top:-14px" width="16" height="20" viewBox="0 0 16 20"><defs><linearGradient id="ig" x1="0" y1="0" x2="1" y2="1"><stop offset="0" stop-color="#2f80dc"/><stop offset="0.55" stop-color="#3f5fd0"/><stop offset="1" stop-color="#7a4ec8"/></linearGradient><linearGradient id="mg" x1="0" y1="0" x2="0" y2="1"><stop offset="0" stop-color="#46dcfa"/><stop offset="1" stop-color="#1a8ef0"/></linearGradient></defs><path d="M0.5 0.5 H10.3 L15.5 5.7 V19.5 H0.5 Z" fill="#fcfcfc" stroke="#707070" stroke-width="1" stroke-linejoin="round"/><path d="M10.3 0.5 V5.7 H15.5" fill="#fff" stroke="#707070" stroke-width="0.9"/><rect x="3.9" y="6.9" width="8.2" height="8.2" rx="0.6" fill="url(#ig)"/><path d="M3.9 14.2 L8.4 9.6 L12.1 13.6 V15.1 H3.9 Z" fill="url(#mg)"/><circle cx="10.4" cy="8.6" r="0.85" fill="#fff"/></svg>
<div class="t" style="left:112.50px;top:-11px;font-size:14.55px;line-height:16px;">Screenshot 2025-06-30 094602.png</div>
<div class="t" style="left:387.60px;top:-11px;font-size:14.55px;line-height:16px;">Program Screenshot - 236.png</div>
<div class="t" style="left:631.60px;top:-11px;font-size:14.55px;line-height:16px;">C:\Users\kj\Pictures\Screenshots\</div>
<div class="t" style="left:880.20px;top:-11px;font-size:14.55px;line-height:16px;">799</div>
<div class="t" style="left:965.30px;top:-11px;font-size:14.55px;line-height:16px;">252</div>
<div class="t" style="left:1060.20px;top:-11px;font-size:14.55px;line-height:16px;">OK</div>
<svg style="left:7px;top:14px" width="16" height="16" viewBox="0 0 16 16"><rect x="0" y="0" width="16" height="16" rx="3.2" fill="#005fb8"/><path d="M3.8 8.2 L6.6 11 L12.2 5.4" fill="none" stroke="#fff" stroke-width="1.1"/></svg>
<div class="t" style="left:29.50px;top:15px;font-size:14.55px;line-height:16px;">237</div>
<svg style="left:91px;top:12px" width="16" height="20" viewBox="0 0 16 20"><defs><linearGradient id="ig" x1="0" y1="0" x2="1" y2="1"><stop offset="0" stop-color="#2f80dc"/><stop offset="0.55" stop-color="#3f5fd0"/><stop offset="1" stop-color="#7a4ec8"/></linearGradient><linearGradient id="mg" x1="0" y1="0" x2="0" y2="1"><stop offset="0" stop-color="#46dcfa"/><stop offset="1" stop-color="#1a8ef0"/></linearGradient></defs><path d="M0.5 0.5 H10.3 L15.5 5.7 V19.5 H0.5 Z" fill="#fcfcfc" stroke="#707070" stroke-width="1" stroke-linejoin="round"/><path d="M10.3 0.5 V5.7 H15.5" fill="#fff" stroke="#707070" stroke-width="0.9"/><rect x="3.9" y="6.9" width="8.2" height="8.2" rx="0.6" fill="url(#ig)"/><path d="M3.9 14.2 L8.4 9.6 L12.1 13.6 V15.1 H3.9 Z" fill="url(#mg)"/><circle cx="10.4" cy="8.6" r="0.85" fill="#fff"/></svg>
<div class="t" style="left:112.50px;top:15px;font-size:14.55px;line-height:16px;">Screenshot 2025-06-30 095826.png</div>
<div class="t" style="left:387.60px;top:15px;font-size:14.55px;line-height:16px;">Program Screenshot - 237.png</div>
<div class="t" style="left:631.60px;top:15px;font-size:14.55px;line-height:16px;">C:\Users\kj\Pictures\Screenshots\</div>
<div class="t" style="left:880.20px;top:15px;font-size:14.55px;line-height:16px;">2024</div>
<div class="t" style="left:965.30px;top:15px;font-size:14.55px;line-height:16px;">909</div>
<div class="t" style="left:1060.20px;top:15px;font-size:14.55px;line-height:16px;">OK</div>
<svg style="left:7px;top:40px" width="16" height="16" viewBox="0 0 16 16"><rect x="0" y="0" width="16" height="16" rx="3.2" fill="#005fb8"/><path d="M3.8 8.2 L6.6 11 L12.2 5.4" fill="none" stroke="#fff" stroke-width="1.1"/></svg>
<div class="t" style="left:29.50px;top:41px;font-size:14.55px;line-height:16px;">238</div>
<svg style="left:91px;top:38px" width="16" height="20" viewBox="0 0 16 20"><defs><linearGradient id="ig" x1="0" y1="0" x2="1" y2="1"><stop offset="0" stop-color="#2f80dc"/><stop offset="0.55" stop-color="#3f5fd0"/><stop offset="1" stop-color="#7a4ec8"/></linearGradient><linearGradient id="mg" x1="0" y1="0" x2="0" y2="1"><stop offset="0" stop-color="#46dcfa"/><stop offset="1" stop-color="#1a8ef0"/></linearGradient></defs><path d="M0.5 0.5 H10.3 L15.5 5.7 V19.5 H0.5 Z" fill="#fcfcfc" stroke="#707070" stroke-width="1" stroke-linejoin="round"/><path d="M10.3 0.5 V5.7 H15.5" fill="#fff" stroke="#707070" stroke-width="0.9"/><rect x="3.9" y="6.9" width="8.2" height="8.2" rx="0.6" fill="url(#ig)"/><path d="M3.9 14.2 L8.4 9.6 L12.1 13.6 V15.1 H3.9 Z" fill="url(#mg)"/><circle cx="10.4" cy="8.6" r="0.85" fill="#fff"/></svg>
<div class="t" style="left:112.50px;top:41px;font-size:14.55px;line-height:16px;">Screenshot 2025-08-03 103623.png</div>
<div class="t" style="left:387.60px;top:41px;font-size:14.55px;line-height:16px;">Program Screenshot - 238.png</div>
<div class="t" style="left:631.60px;top:41px;font-size:14.55px;line-height:16px;">C:\Users\kj\Pictures\Screenshots\</div>
<div class="t" style="left:880.20px;top:41px;font-size:14.55px;line-height:16px;">1695</div>
<div class="t" style="left:965.30px;top:41px;font-size:14.55px;line-height:16px;">1262</div>
<div class="t" style="left:1060.20px;top:41px;font-size:14.55px;line-height:16px;">OK</div>
<svg style="left:7px;top:66px" width="16" height="16" viewBox="0 0 16 16"><rect x="0" y="0" width="16" height="16" rx="3.2" fill="#005fb8"/><path d="M3.8 8.2 L6.6 11 L12.2 5.4" fill="none" stroke="#fff" stroke-width="1.1"/></svg>
<div class="t" style="left:29.50px;top:67px;font-size:14.55px;line-height:16px;">239</div>
<svg style="left:91px;top:64px" width="16" height="20" viewBox="0 0 16 20"><defs><linearGradient id="ig" x1="0" y1="0" x2="1" y2="1"><stop offset="0" stop-color="#2f80dc"/><stop offset="0.55" stop-color="#3f5fd0"/><stop offset="1" stop-color="#7a4ec8"/></linearGradient><linearGradient id="mg" x1="0" y1="0" x2="0" y2="1"><stop offset="0" stop-color="#46dcfa"/><stop offset="1" stop-color="#1a8ef0"/></linearGradient></defs><path d="M0.5 0.5 H10.3 L15.5 5.7 V19.5 H0.5 Z" fill="#fcfcfc" stroke="#707070" stroke-width="1" stroke-linejoin="round"/><path d="M10.3 0.5 V5.7 H15.5" fill="#fff" stroke="#707070" stroke-width="0.9"/><rect x="3.9" y="6.9" width="8.2" height="8.2" rx="0.6" fill="url(#ig)"/><path d="M3.9 14.2 L8.4 9.6 L12.1 13.6 V15.1 H3.9 Z" fill="url(#mg)"/><circle cx="10.4" cy="8.6" r="0.85" fill="#fff"/></svg>
<div class="t" style="left:112.50px;top:67px;font-size:14.55px;line-height:16px;">Screenshot 2025-08-03 103804.png</div>
<div class="t" style="left:387.60px;top:67px;font-size:14.55px;line-height:16px;">Program Screenshot - 239.png</div>
<div class="t" style="left:631.60px;top:67px;font-size:14.55px;line-height:16px;">C:\Users\kj\Pictures\Screenshots\</div>
<div class="t" style="left:880.20px;top:67px;font-size:14.55px;line-height:16px;">1158</div>
<div class="t" style="left:965.30px;top:67px;font-size:14.55px;line-height:16px;">613</div>
<div class="t" style="left:1060.20px;top:67px;font-size:14.55px;line-height:16px;">OK</div>
<svg style="left:7px;top:92px" width="16" height="16" viewBox="0 0 16 16"><rect x="0" y="0" width="16" height="16" rx="3.2" fill="#005fb8"/><path d="M3.8 8.2 L6.6 11 L12.2 5.4" fill="none" stroke="#fff" stroke-width="1.1"/></svg>
<div class="t" style="left:29.50px;top:93px;font-size:14.55px;line-height:16px;">240</div>
<svg style="left:91px;top:90px" width="16" height="20" viewBox="0 0 16 20"><defs><linearGradient id="ig" x1="0" y1="0" x2="1" y2="1"><stop offset="0" stop-color="#2f80dc"/><stop offset="0.55" stop-color="#3f5fd0"/><stop offset="1" stop-color="#7a4ec8"/></linearGradient><linearGradient id="mg" x1="0" y1="0" x2="0" y2="1"><stop offset="0" stop-color="#46dcfa"/><stop offset="1" stop-color="#1a8ef0"/></linearGradient></defs><path d="M0.5 0.5 H10.3 L15.5 5.7 V19.5 H0.5 Z" fill="#fcfcfc" stroke="#707070" stroke-width="1" stroke-linejoin="round"/><path d="M10.3 0.5 V5.7 H15.5" fill="#fff" stroke="#707070" stroke-width="0.9"/><rect x="3.9" y="6.9" width="8.2" height="8.2" rx="0.6" fill="url(#ig)"/><path d="M3.9 14.2 L8.4 9.6 L12.1 13.6 V15.1 H3.9 Z" fill="url(#mg)"/><circle cx="10.4" cy="8.6" r="0.85" fill="#fff"/></svg>
<div class="t" style="left:112.50px;top:93px;font-size:14.55px;line-height:16px;">Screenshot 2025-08-03 103920.png</div>
<div class="t" style="left:387.60px;top:93px;font-size:14.55px;line-height:16px;">Program Screenshot - 240.png</div>
<div class="t" style="left:631.60px;top:93px;font-size:14.55px;line-height:16px;">C:\Users\kj\Pictures\Screenshots\</div>
<div class="t" style="left:880.20px;top:93px;font-size:14.55px;line-height:16px;">1695</div>
<div class="t" style="left:965.30px;top:93px;font-size:14.55px;line-height:16px;">1262</div>
<div class="t" style="left:1060.20px;top:93px;font-size:14.55px;line-height:16px;">OK</div>
<svg style="left:7px;top:118px" width="16" height="16" viewBox="0 0 16 16"><rect x="0" y="0" width="16" height="16" rx="3.2" fill="#005fb8"/><path d="M3.8 8.2 L6.6 11 L12.2 5.4" fill="none" stroke="#fff" stroke-width="1.1"/></svg>
<div class="t" style="left:29.50px;top:119px;font-size:14.55px;line-height:16px;">241</div>
<svg style="left:91px;top:116px" width="16" height="20" viewBox="0 0 16 20"><defs><linearGradient id="ig" x1="0" y1="0" x2="1" y2="1"><stop offset="0" stop-color="#2f80dc"/><stop offset="0.55" stop-color="#3f5fd0"/><stop offset="1" stop-color="#7a4ec8"/></linearGradient><linearGradient id="mg" x1="0" y1="0" x2="0" y2="1"><stop offset="0" stop-color="#46dcfa"/><stop offset="1" stop-color="#1a8ef0"/></linearGradient></defs><path d="M0.5 0.5 H10.3 L15.5 5.7 V19.5 H0.5 Z" fill="#fcfcfc" stroke="#707070" stroke-width="1" stroke-linejoin="round"/><path d="M10.3 0.5 V5.7 H15.5" fill="#fff" stroke="#707070" stroke-width="0.9"/><rect x="3.9" y="6.9" width="8.2" height="8.2" rx="0.6" fill="url(#ig)"/><path d="M3.9 14.2 L8.4 9.6 L12.1 13.6 V15.1 H3.9 Z" fill="url(#mg)"/><circle cx="10.4" cy="8.6" r="0.85" fill="#fff"/></svg>
<div class="t" style="left:112.50px;top:119px;font-size:14.55px;line-height:16px;">Screenshot 2025-08-03 103936.png</div>
<div class="t" style="left:387.60px;top:119px;font-size:14.55px;line-height:16px;">Program Screenshot - 241.png</div>
<div class="t" style="left:631.60px;top:119px;font-size:14.55px;line-height:16px;">C:\Users\kj\Pictures\Screenshots\</div>
<div class="t" style="left:880.20px;top:119px;font-size:14.55px;line-height:16px;">1695</div>
<div class="t" style="left:965.30px;top:119px;font-size:14.55px;line-height:16px;">1262</div>
<div class="t" style="left:1060.20px;top:119px;font-size:14.55px;line-height:16px;">OK</div>
<svg style="left:7px;top:144px" width="16" height="16" viewBox="0 0 16 16"><rect x="0" y="0" width="16" height="16" rx="3.2" fill="#005fb8"/><path d="M3.8 8.2 L6.6 11 L12.2 5.4" fill="none" stroke="#fff" stroke-width="1.1"/></svg>
<div class="t" style="left:29.50px;top:145px;font-size:14.55px;line-height:16px;">242</div>
<svg style="left:91px;top:142px" width="16" height="20" viewBox="0 0 16 20"><defs><linearGradient id="ig" x1="0" y1="0" x2="1" y2="1"><stop offset="0" stop-color="#2f80dc"/><stop offset="0.55" stop-color="#3f5fd0"/><stop offset="1" stop-color="#7a4ec8"/></linearGradient><linearGradient id="mg" x1="0" y1="0" x2="0" y2="1"><stop offset="0" stop-color="#46dcfa"/><stop offset="1" stop-color="#1a8ef0"/></linearGradient></defs><path d="M0.5 0.5 H10.3 L15.5 5.7 V19.5 H0.5 Z" fill="#fcfcfc" stroke="#707070" stroke-width="1" stroke-linejoin="round"/><path d="M10.3 0.5 V5.7 H15.5" fill="#fff" stroke="#707070" stroke-width="0.9"/><rect x="3.9" y="6.9" width="8.2" height="8.2" rx="0.6" fill="url(#ig)"/><path d="M3.9 14.2 L8.4 9.6 L12.1 13.6 V15.1 H3.9 Z" fill="url(#mg)"/><circle cx="10.4" cy="8.6" r="0.85" fill="#fff"/></svg>
<div class="t" style="left:112.50px;top:145px;font-size:14.55px;line-height:16px;">Screenshot 2025-08-03 103956.png</div>
<div class="t" style="left:387.60px;top:145px;font-size:14.55px;line-height:16px;">Program Screenshot - 242.png</div>
<div class="t" style="left:631.60px;top:145px;font-size:14.55px;line-height:16px;">C:\Users\kj\Pictures\Screenshots\</div>
<div class="t" style="left:880.20px;top:145px;font-size:14.55px;line-height:16px;">1695</div>
<div class="t" style="left:965.30px;top:145px;font-size:14.55px;line-height:16px;">1262</div>
<div class="t" style="left:1060.20px;top:145px;font-size:14.55px;line-height:16px;">OK</div>
<svg style="left:7px;top:170px" width="16" height="16" viewBox="0 0 16 16"><rect x="0" y="0" width="16" height="16" rx="3.2" fill="#005fb8"/><path d="M3.8 8.2 L6.6 11 L12.2 5.4" fill="none" stroke="#fff" stroke-width="1.1"/></svg>
<div class="t" style="left:29.50px;top:171px;font-size:14.55px;line-height:16px;">243</div>
<svg style="left:91px;top:168px" width="16" height="20" viewBox="0 0 16 20"><defs><linearGradient id="ig" x1="0" y1="0" x2="1" y2="1"><stop offset="0" stop-color="#2f80dc"/><stop offset="0.55" stop-color="#3f5fd0"/><stop offset="1" stop-color="#7a4ec8"/></linearGradient><linearGradient id="mg" x1="0" y1="0" x2="0" y2="1"><stop offset="0" stop-color="#46dcfa"/><stop offset="1" stop-color="#1a8ef0"/></linearGradient></defs><path d="M0.5 0.5 H10.3 L15.5 5.7 V19.5 H0.5 Z" fill="#fcfcfc" stroke="#707070" stroke-width="1" stroke-linejoin="round"/><path d="M10.3 0.5 V5.7 H15.5" fill="#fff" stroke="#707070" stroke-width="0.9"/><rect x="3.9" y="6.9" width="8.2" height="8.2" rx="0.6" fill="url(#ig)"/><path d="M3.9 14.2 L8.4 9.6 L12.1 13.6 V15.1 H3.9 Z" fill="url(#mg)"/><circle cx="10.4" cy="8.6" r="0.85" fill="#fff"/></svg>
<div class="t" style="left:112.50px;top:171px;font-size:14.55px;line-height:16px;">Screenshot 2025-08-03 104012.png</div>
<div class="t" style="left:387.60px;top:171px;font-size:14.55px;line-height:16px;">Program Screenshot - 243.png</div>
<div class="t" style="left:631.60px;top:171px;font-size:14.55px;line-height:16px;">C:\Users\kj\Pictures\Screenshots\</div>
<div class="t" style="left:880.20px;top:171px;font-size:14.55px;line-height:16px;">1695</div>
<div class="t" style="left:965.30px;top:171px;font-size:14.55px;line-height:16px;">1262</div>
<div class="t" style="left:1060.20px;top:171px;font-size:14.55px;line-height:16px;">OK</div>
<svg style="left:7px;top:196px" width="16" height="16" viewBox="0 0 16 16"><rect x="0" y="0" width="16" height="16" rx="3.2" fill="#005fb8"/><path d="M3.8 8.2 L6.6 11 L12.2 5.4" fill="none" stroke="#fff" stroke-width="1.1"/></svg>
<div class="t" style="left:29.50px;top:197px;font-size:14.55px;line-height:16px;">244</div>
<svg style="left:91px;top:194px" width="16" height="20" viewBox="0 0 16 20"><defs><linearGradient id="ig" x1="0" y1="0" x2="1" y2="1"><stop offset="0" stop-color="#2f80dc"/><stop offset="0.55" stop-color="#3f5fd0"/><stop offset="1" stop-color="#7a4ec8"/></linearGradient><linearGradient id="mg" x1="0" y1="0" x2="0" y2="1"><stop offset="0" stop-color="#46dcfa"/><stop offset="1" stop-color="#1a8ef0"/></linearGradient></defs><path d="M0.5 0.5 H10.3 L15.5 5.7 V19.5 H0.5 Z" fill="#fcfcfc" stroke="#707070" stroke-width="1" stroke-linejoin="round"/><path d="M10.3 0.5 V5.7 H15.5" fill="#fff" stroke="#707070" stroke-width="0.9"/><rect x="3.9" y="6.9" width="8.2" height="8.2" rx="0.6" fill="url(#ig)"/><path d="M3.9 14.2 L8.4 9.6 L12.1 13.6 V15.1 H3.9 Z" fill="url(#mg)"/><circle cx="10.4" cy="8.6" r="0.85" fill="#fff"/></svg>
<div class="t" style="left:112.50px;top:197px;font-size:14.55px;line-height:16px;">Screenshot 2025-08-03 104032.png</div>
<div class="t" style="left:387.60px;top:197px;font-size:14.55px;line-height:16px;">Program Screenshot - 244.png</div>
<div class="t" style="left:631.60px;top:197px;font-size:14.55px;line-height:16px;">C:\Users\kj\Pictures\Screenshots\</div>
<div class="t" style="left:880.20px;top:197px;font-size:14.55px;line-height:16px;">1695</div>
<div class="t" style="left:965.30px;top:197px;font-size:14.55px;line-height:16px;">1262</div>
<div class="t" style="left:1060.20px;top:197px;font-size:14.55px;line-height:16px;">OK</div>
<svg style="left:7px;top:222px" width="16" height="16" viewBox="0 0 16 16"><rect x="0" y="0" width="16" height="16" rx="3.2" fill="#005fb8"/><path d="M3.8 8.2 L6.6 11 L12.2 5.4" fill="none" stroke="#fff" stroke-width="1.1"/></svg>
<div class="t" style="left:29.50px;top:223px;font-size:14.55px;line-height:16px;">245</div>
<svg style="left:91px;top:220px" width="16" height="20" viewBox="0 0 16 20"><defs><linearGradient id="ig" x1="0" y1="0" x2="1" y2="1"><stop offset="0" stop-color="#2f80dc"/><stop offset="0.55" stop-color="#3f5fd0"/><stop offset="1" stop-color="#7a4ec8"/></linearGradient><linearGradient id="mg" x1="0" y1="0" x2="0" y2="1"><stop offset="0" stop-color="#46dcfa"/><stop offset="1" stop-color="#1a8ef0"/></linearGradient></defs><path d="M0.5 0.5 H10.3 L15.5 5.7 V19.5 H0.5 Z" fill="#fcfcfc" stroke="#707070" stroke-width="1" stroke-linejoin="round"/><path d="M10.3 0.5 V5.7 H15.5" fill="#fff" stroke="#707070" stroke-width="0.9"/><rect x="3.9" y="6.9" width="8.2" height="8.2" rx="0.6" fill="url(#ig)"/><path d="M3.9 14.2 L8.4 9.6 L12.1 13.6 V15.1 H3.9 Z" fill="url(#mg)"/><circle cx="10.4" cy="8.6" r="0.85" fill="#fff"/></svg>
<div class="t" style="left:112.50px;top:223px;font-size:14.55px;line-height:16px;">Screenshot 2025-08-03 104039.png</div>
<div class="t" style="left:387.60px;top:223px;font-size:14.55px;line-height:16px;">Program Screenshot - 245.png</div>
<div class="t" style="left:631.60px;top:223px;font-size:14.55px;line-height:16px;">C:\Users\kj\Pictures\Screenshots\</div>
<div class="t" style="left:880.20px;top:223px;font-size:14.55px;line-height:16px;">1695</div>
<div class="t" style="left:965.30px;top:223px;font-size:14.55px;line-height:16px;">1262</div>
<div class="t" style="left:1060.20px;top:223px;font-size:14.55px;line-height:16px;">OK</div>
<svg style="left:7px;top:248px" width="16" height="16" viewBox="0 0 16 16"><rect x="0" y="0" width="16" height="16" rx="3.2" fill="#005fb8"/><path d="M3.8 8.2 L6.6 11 L12.2 5.4" fill="none" stroke="#fff" stroke-width="1.1"/></svg>
<div class="t" style="left:29.50px;top:249px;font-size:14.55px;line-height:16px;">246</div>
<svg style="left:91px;top:246px" width="16" height="20" viewBox="0 0 16 20"><defs><linearGradient id="ig" x1="0" y1="0" x2="1" y2="1"><stop offset="0" stop-color="#2f80dc"/><stop offset="0.55" stop-color="#3f5fd0"/><stop offset="1" stop-color="#7a4ec8"/></linearGradient><linearGradient id="mg" x1="0" y1="0" x2="0" y2="1"><stop offset="0" stop-color="#46dcfa"/><stop offset="1" stop-color="#1a8ef0"/></linearGradient></defs><path d="M0.5 0.5 H10.3 L15.5 5.7 V19.5 H0.5 Z" fill="#fcfcfc" stroke="#707070" stroke-width="1" stroke-linejoin="round"/><path d="M10.3 0.5 V5.7 H15.5" fill="#fff" stroke="#707070" stroke-width="0.9"/><rect x="3.9" y="6.9" width="8.2" height="8.2" rx="0.6" fill="url(#ig)"/><path d="M3.9 14.2 L8.4 9.6 L12.1 13.6 V15.1 H3.9 Z" fill="url(#mg)"/><circle cx="10.4" cy="8.6" r="0.85" fill="#fff"/></svg>
<div class="t" style="left:112.50px;top:249px;font-size:14.55px;line-height:16px;">Screenshot 2025-08-03 104044.png</div>
<div class="t" style="left:387.60px;top:249px;font-size:14.55px;line-height:16px;">Program Screenshot - 246.png</div>
<div class="t" style="left:631.60px;top:249px;font-size:14.55px;line-height:16px;">C:\Users\kj\Pictures\Screenshots\</div>
<div class="t" style="left:880.20px;top:249px;font-size:14.55px;line-height:16px;">1695</div>
<div class="t" style="left:965.30px;top:249px;font-size:14.55px;line-height:16px;">1262</div>
<div class="t" style="left:1060.20px;top:249px;font-size:14.55px;line-height:16px;">OK</div>
<svg style="left:7px;top:274px" width="16" height="16" viewBox="0 0 16 16"><rect x="0" y="0" width="16" height="16" rx="3.2" fill="#005fb8"/><path d="M3.8 8.2 L6.6 11 L12.2 5.4" fill="none" stroke="#fff" stroke-width="1.1"/></svg>
<div class="t" style="left:29.50px;top:275px;font-size:14.55px;line-height:16px;">247</div>
<svg style="left:91px;top:272px" width="16" height="20" viewBox="0 0 16 20"><defs><linearGradient id="ig" x1="0" y1="0" x2="1" y2="1"><stop offset="0" stop-color="#2f80dc"/><stop offset="0.55" stop-color="#3f5fd0"/><stop offset="1" stop-color="#7a4ec8"/></linearGradient><linearGradient id="mg" x1="0" y1="0" x2="0" y2="1"><stop offset="0" stop-color="#46dcfa"/><stop offset="1" stop-color="#1a8ef0"/></linearGradient></defs><path d="M0.5 0.5 H10.3 L15.5 5.7 V19.5 H0.5 Z" fill="#fcfcfc" stroke="#707070" stroke-width="1" stroke-linejoin="round"/><path d="M10.3 0.5 V5.7 H15.5" fill="#fff" stroke="#707070" stroke-width="0.9"/><rect x="3.9" y="6.9" width="8.2" height="8.2" rx="0.6" fill="url(#ig)"/><path d="M3.9 14.2 L8.4 9.6 L12.1 13.6 V15.1 H3.9 Z" fill="url(#mg)"/><circle cx="10.4" cy="8.6" r="0.85" fill="#fff"/></svg>
<div class="t" style="left:112.50px;top:275px;font-size:14.55px;line-height:16px;">Screenshot 2025-08-03 104051.png</div>
<div class="t" style="left:387.60px;top:275px;font-size:14.55px;line-height:16px;">Program Screenshot - 247.png</div>
<div class="t" style="left:631.60px;top:275px;font-size:14.55px;line-height:16px;">C:\Users\kj\Pictures\Screenshots\</div>
<div class="t" style="left:880.20px;top:275px;font-size:14.55px;line-height:16px;">1695</div>
<div class="t" style="left:965.30px;top:275px;font-size:14.55px;line-height:16px;">1262</div>
<div class="t" style="left:1060.20px;top:275px;font-size:14.55px;line-height:16px;">OK</div>
<svg style="left:7px;top:300px" width="16" height="16" viewBox="0 0 16 16"><rect x="0" y="0" width="16" height="16" rx="3.2" fill="#005fb8"/><path d="M3.8 8.2 L6.6 11 L12.2 5.4" fill="none" stroke="#fff" stroke-width="1.1"/></svg>
<div class="t" style="left:29.50px;top:301px;font-size:14.55px;line-height:16px;">248</div>
<svg style="left:91px;top:298px" width="16" height="20" viewBox="0 0 16 20"><defs><linearGradient id="ig" x1="0" y1="0" x2="1" y2="1"><stop offset="0" stop-color="#2f80dc"/><stop offset="0.55" stop-color="#3f5fd0"/><stop offset="1" stop-color="#7a4ec8"/></linearGradient><linearGradient id="mg" x1="0" y1="0" x2="0" y2="1"><stop offset="0" stop-color="#46dcfa"/><stop offset="1" stop-color="#1a8ef0"/></linearGradient></defs><path d="M0.5 0.5 H10.3 L15.5 5.7 V19.5 H0.5 Z" fill="#fcfcfc" stroke="#707070" stroke-width="1" stroke-linejoin="round"/><path d="M10.3 0.5 V5.7 H15.5" fill="#fff" stroke="#707070" stroke-width="0.9"/><rect x="3.9" y="6.9" width="8.2" height="8.2" rx="0.6" fill="url(#ig)"/><path d="M3.9 14.2 L8.4 9.6 L12.1 13.6 V15.1 H3.9 Z" fill="url(#mg)"/><circle cx="10.4" cy="8.6" r="0.85" fill="#fff"/></svg>
<div class="t" style="left:112.50px;top:301px;font-size:14.55px;line-height:16px;">Screenshot 2025-08-03 104056.png</div>
<div class="t" style="left:387.60px;top:301px;font-size:14.55px;line-height:16px;">Program Screenshot - 248.png</div>
<div class="t" style="left:631.60px;top:301px;font-size:14.55px;line-height:16px;">C:\Users\kj\Pictures\Screenshots\</div>
<div class="t" style="left:880.20px;top:301px;font-size:14.55px;line-height:16px;">1695</div>
<div class="t" style="left:965.30px;top:301px;font-size:14.55px;line-height:16px;">1262</div>
<div class="t" style="left:1060.20px;top:301px;font-size:14.55px;line-height:16px;">OK</div>
<svg style="left:7px;top:326px" width="16" height="16" viewBox="0 0 16 16"><rect x="0" y="0" width="16" height="16" rx="3.2" fill="#005fb8"/><path d="M3.8 8.2 L6.6 11 L12.2 5.4" fill="none" stroke="#fff" stroke-width="1.1"/></svg>
<div class="t" style="left:29.50px;top:327px;font-size:14.55px;line-height:16px;">249</div>
<svg style="left:91px;top:324px" width="16" height="20" viewBox="0 0 16 20"><defs><linearGradient id="ig" x1="0" y1="0" x2="1" y2="1"><stop offset="0" stop-color="#2f80dc"/><stop offset="0.55" stop-color="#3f5fd0"/><stop offset="1" stop-color="#7a4ec8"/></linearGradient><linearGradient id="mg" x1="0" y1="0" x2="0" y2="1"><stop offset="0" stop-color="#46dcfa"/><stop offset="1" stop-color="#1a8ef0"/></linearGradient></defs><path d="M0.5 0.5 H10.3 L15.5 5.7 V19.5 H0.5 Z" fill="#fcfcfc" stroke="#707070" stroke-width="1" stroke-linejoin="round"/><path d="M10.3 0.5 V5.7 H15.5" fill="#fff" stroke="#707070" stroke-width="0.9"/><rect x="3.9" y="6.9" width="8.2" height="8.2" rx="0.6" fill="url(#ig)"/><path d="M3.9 14.2 L8.4 9.6 L12.1 13.6 V15.1 H3.9 Z" fill="url(#mg)"/><circle cx="10.4" cy="8.6" r="0.85" fill="#fff"/></svg>
<div class="t" style="left:112.50px;top:327px;font-size:14.55px;line-height:16px;">Screenshot 2025-08-03 104101.png</div>
<div class="t" style="left:387.60px;top:327px;font-size:14.55px;line-height:16px;">Program Screenshot - 249.png</div>
<div class="t" style="left:631.60px;top:327px;font-size:14.55px;line-height:16px;">C:\Users\kj\Pictures\Screenshots\</div>
<div class="t" style="left:880.20px;top:327px;font-size:14.55px;line-height:16px;">1695</div>
<div class="t" style="left:965.30px;top:327px;font-size:14.55px;line-height:16px;">1262</div>
<div class="t" style="left:1060.20px;top:327px;font-size:14.55px;line-height:16px;">OK</div>
<svg style="left:7px;top:352px" width="16" height="16" viewBox="0 0 16 16"><rect x="0" y="0" width="16" height="16" rx="3.2" fill="#005fb8"/><path d="M3.8 8.2 L6.6 11 L12.2 5.4" fill="none" stroke="#fff" stroke-width="1.1"/></svg>
<div class="t" style="left:29.50px;top:353px;font-size:14.55px;line-height:16px;">250</div>
<svg style="left:91px;top:350px" width="16" height="20" viewBox="0 0 16 20"><defs><linearGradient id="ig" x1="0" y1="0" x2="1" y2="1"><stop offset="0" stop-color="#2f80dc"/><stop offset="0.55" stop-color="#3f5fd0"/><stop offset="1" stop-color="#7a4ec8"/></linearGradient><linearGradient id="mg" x1="0" y1="0" x2="0" y2="1"><stop offset="0" stop-color="#46dcfa"/><stop offset="1" stop-color="#1a8ef0"/></linearGradient></defs><path d="M0.5 0.5 H10.3 L15.5 5.7 V19.5 H0.5 Z" fill="#fcfcfc" stroke="#707070" stroke-width="1" stroke-linejoin="round"/><path d="M10.3 0.5 V5.7 H15.5" fill="#fff" stroke="#707070" stroke-width="0.9"/><rect x="3.9" y="6.9" width="8.2" height="8.2" rx="0.6" fill="url(#ig)"/><path d="M3.9 14.2 L8.4 9.6 L12.1 13.6 V15.1 H3.9 Z" fill="url(#mg)"/><circle cx="10.4" cy="8.6" r="0.85" fill="#fff"/></svg>
<div class="t" style="left:112.50px;top:353px;font-size:14.55px;line-height:16px;">Screenshot 2025-08-03 104309.png</div>
<div class="t" style="left:387.60px;top:353px;font-size:14.55px;line-height:16px;">Program Screenshot - 250.png</div>
<div class="t" style="left:631.60px;top:353px;font-size:14.55px;line-height:16px;">C:\Users\kj\Pictures\Screenshots\</div>
<div class="t" style="left:880.20px;top:353px;font-size:14.55px;line-height:16px;">1695</div>
<div class="t" style="left:965.30px;top:353px;font-size:14.55px;line-height:16px;">1262</div>
<div class="t" style="left:1060.20px;top:353px;font-size:14.55px;line-height:16px;">OK</div>
<svg style="left:7px;top:378px" width="16" height="16" viewBox="0 0 16 16"><rect x="0" y="0" width="16" height="16" rx="3.2" fill="#005fb8"/><path d="M3.8 8.2 L6.6 11 L12.2 5.4" fill="none" stroke="#fff" stroke-width="1.1"/></svg>
<div class="t" style="left:29.50px;top:379px;font-size:14.55px;line-height:16px;">251</div>
<svg style="left:91px;top:376px" width="16" height="20" viewBox="0 0 16 20"><defs><linearGradient id="ig" x1="0" y1="0" x2="1" y2="1"><stop offset="0" stop-color="#2f80dc"/><stop offset="0.55" stop-color="#3f5fd0"/><stop offset="1" stop-color="#7a4ec8"/></linearGradient><linearGradient id="mg" x1="0" y1="0" x2="0" y2="1"><stop offset="0" stop-color="#46dcfa"/><stop offset="1" stop-color="#1a8ef0"/></linearGradient></defs><path d="M0.5 0.5 H10.3 L15.5 5.7 V19.5 H0.5 Z" fill="#fcfcfc" stroke="#707070" stroke-width="1" stroke-linejoin="round"/><path d="M10.3 0.5 V5.7 H15.5" fill="#fff" stroke="#707070" stroke-width="0.9"/><rect x="3.9" y="6.9" width="8.2" height="8.2" rx="0.6" fill="url(#ig)"/><path d="M3.9 14.2 L8.4 9.6 L12.1 13.6 V15.1 H3.9 Z" fill="url(#mg)"/><circle cx="10.4" cy="8.6" r="0.85" fill="#fff"/></svg>
<div class="t" style="left:112.50px;top:379px;font-size:14.55px;line-height:16px;">Screenshot 2025-08-03 104353.png</div>
<div class="t" style="left:387.60px;top:379px;font-size:14.55px;line-height:16px;">Program Screenshot - 251.png</div>
<div class="t" style="left:631.60px;top:379px;font-size:14.55px;line-height:16px;">C:\Users\kj\Pictures\Screenshots\</div>
<div class="t" style="left:880.20px;top:379px;font-size:14.55px;line-height:16px;">1695</div>
<div class="t" style="left:965.30px;top:379px;font-size:14.55px;line-height:16px;">1262</div>
<div class="t" style="left:1060.20px;top:379px;font-size:14.55px;line-height:16px;">OK</div>
<svg style="left:7px;top:404px" width="16" height="16" viewBox="0 0 16 16"><rect x="0" y="0" width="16" height="16" rx="3.2" fill="#005fb8"/><path d="M3.8 8.2 L6.6 11 L12.2 5.4" fill="none" stroke="#fff" stroke-width="1.1"/></svg>
<div class="t" style="left:29.50px;top:405px;font-size:14.55px;line-height:16px;">252</div>
<svg style="left:91px;top:402px" width="16" height="20" viewBox="0 0 16 20"><defs><linearGradient id="ig" x1="0" y1="0" x2="1" y2="1"><stop offset="0" stop-color="#2f80dc"/><stop offset="0.55" stop-color="#3f5fd0"/><stop offset="1" stop-color="#7a4ec8"/></linearGradient><linearGradient id="mg" x1="0" y1="0" x2="0" y2="1"><stop offset="0" stop-color="#46dcfa"/><stop offset="1" stop-color="#1a8ef0"/></linearGradient></defs><path d="M0.5 0.5 H10.3 L15.5 5.7 V19.5 H0.5 Z" fill="#fcfcfc" stroke="#707070" stroke-width="1" stroke-linejoin="round"/><path d="M10.3 0.5 V5.7 H15.5" fill="#fff" stroke="#707070" stroke-width="0.9"/><rect x="3.9" y="6.9" width="8.2" height="8.2" rx="0.6" fill="url(#ig)"/><path d="M3.9 14.2 L8.4 9.6 L12.1 13.6 V15.1 H3.9 Z" fill="url(#mg)"/><circle cx="10.4" cy="8.6" r="0.85" fill="#fff"/></svg>
<div class="t" style="left:112.50px;top:405px;font-size:14.55px;line-height:16px;">Screenshot 2025-08-03 104821.png</div>
<div class="t" style="left:387.60px;top:405px;font-size:14.55px;line-height:16px;">Program Screenshot - 252.png</div>
<div class="t" style="left:631.60px;top:405px;font-size:14.55px;line-height:16px;">C:\Users\kj\Pictures\Screenshots\</div>
<div class="t" style="left:880.20px;top:405px;font-size:14.55px;line-height:16px;">1695</div>
<div class="t" style="left:965.30px;top:405px;font-size:14.55px;line-height:16px;">1262</div>
<div class="t" style="left:1060.20px;top:405px;font-size:14.55px;line-height:16px;">OK</div>
<svg style="left:7px;top:430px" width="16" height="16" viewBox="0 0 16 16"><rect x="0" y="0" width="16" height="16" rx="3.2" fill="#005fb8"/><path d="M3.8 8.2 L6.6 11 L12.2 5.4" fill="none" stroke="#fff" stroke-width="1.1"/></svg>
<div class="t" style="left:29.50px;top:431px;font-size:14.55px;line-height:16px;">253</div>
<svg style="left:91px;top:428px" width="16" height="20" viewBox="0 0 16 20"><defs><linearGradient id="ig" x1="0" y1="0" x2="1" y2="1"><stop offset="0" stop-color="#2f80dc"/><stop offset="0.55" stop-color="#3f5fd0"/><stop offset="1" stop-color="#7a4ec8"/></linearGradient><linearGradient id="mg" x1="0" y1="0" x2="0" y2="1"><stop offset="0" stop-color="#46dcfa"/><stop offset="1" stop-color="#1a8ef0"/></linearGradient></defs><path d="M0.5 0.5 H10.3 L15.5 5.7 V19.5 H0.5 Z" fill="#fcfcfc" stroke="#707070" stroke-width="1" stroke-linejoin="round"/><path d="M10.3 0.5 V5.7 H15.5" fill="#fff" stroke="#707070" stroke-width="0.9"/><rect x="3.9" y="6.9" width="8.2" height="8.2" rx="0.6" fill="url(#ig)"/><path d="M3.9 14.2 L8.4 9.6 L12.1 13.6 V15.1 H3.9 Z" fill="url(#mg)"/><circle cx="10.4" cy="8.6" r="0.85" fill="#fff"/></svg>
<div class="t" style="left:112.50px;top:431px;font-size:14.55px;line-height:16px;">Screenshot 2025-08-03 105501.png</div>
<div class="t" style="left:387.60px;top:431px;font-size:14.55px;line-height:16px;">Program Screenshot - 253.png</div>
<div class="t" style="left:631.60px;top:431px;font-size:14.55px;line-height:16px;">C:\Users\kj\Pictures\Screenshots\</div>
<div class="t" style="left:880.20px;top:431px;font-size:14.55px;line-height:16px;">1694</div>
<div class="t" style="left:965.30px;top:431px;font-size:14.55px;line-height:16px;">1261</div>
<div class="t" style="left:1060.20px;top:431px;font-size:14.55px;line-height:16px;">OK</div>
<svg style="left:7px;top:456px" width="16" height="16" viewBox="0 0 16 16"><rect x="0" y="0" width="16" height="16" rx="3.2" fill="#005fb8"/><path d="M3.8 8.2 L6.6 11 L12.2 5.4" fill="none" stroke="#fff" stroke-width="1.1"/></svg>
<div class="t" style="left:29.50px;top:457px;font-size:14.55px;line-height:16px;">254</div>
<svg style="left:91px;top:454px" width="16" height="20" viewBox="0 0 16 20"><defs><linearGradient id="ig" x1="0" y1="0" x2="1" y2="1"><stop offset="0" stop-color="#2f80dc"/><stop offset="0.55" stop-color="#3f5fd0"/><stop offset="1" stop-color="#7a4ec8"/></linearGradient><linearGradient id="mg" x1="0" y1="0" x2="0" y2="1"><stop offset="0" stop-color="#46dcfa"/><stop offset="1" stop-color="#1a8ef0"/></linearGradient></defs><path d="M0.5 0.5 H10.3 L15.5 5.7 V19.5 H0.5 Z" fill="#fcfcfc" stroke="#707070" stroke-width="1" stroke-linejoin="round"/><path d="M10.3 0.5 V5.7 H15.5" fill="#fff" stroke="#707070" stroke-width="0.9"/><rect x="3.9" y="6.9" width="8.2" height="8.2" rx="0.6" fill="url(#ig)"/><path d="M3.9 14.2 L8.4 9.6 L12.1 13.6 V15.1 H3.9 Z" fill="url(#mg)"/><circle cx="10.4" cy="8.6" r="0.85" fill="#fff"/></svg>
<div class="t" style="left:112.50px;top:457px;font-size:14.55px;line-height:16px;">Screenshot 2025-08-03 105529.png</div>
<div class="t" style="left:387.60px;top:457px;font-size:14.55px;line-height:16px;">Program Screenshot - 254.png</div>
<div class="t" style="left:631.60px;top:457px;font-size:14.55px;line-height:16px;">C:\Users\kj\Pictures\Screenshots\</div>
<div class="t" style="left:880.20px;top:457px;font-size:14.55px;line-height:16px;">1694</div>
<div class="t" style="left:965.30px;top:457px;font-size:14.55px;line-height:16px;">1261</div>
<div class="t" style="left:1060.20px;top:457px;font-size:14.55px;line-height:16px;">OK</div>
<svg style="left:7px;top:482px" width="16" height="16" viewBox="0 0 16 16"><rect x="0" y="0" width="16" height="16" rx="3.2" fill="#005fb8"/><path d="M3.8 8.2 L6.6 11 L12.2 5.4" fill="none" stroke="#fff" stroke-width="1.1"/></svg>
<div class="t" style="left:29.50px;top:483px;font-size:14.55px;line-height:16px;">255</div>
<svg style="left:91px;top:480px" width="16" height="20" viewBox="0 0 16 20"><defs><linearGradient id="ig" x1="0" y1="0" x2="1" y2="1"><stop offset="0" stop-color="#2f80dc"/><stop offset="0.55" stop-color="#3f5fd0"/><stop offset="1" stop-color="#7a4ec8"/></linearGradient><linearGradient id="mg" x1="0" y1="0" x2="0" y2="1"><stop offset="0" stop-color="#46dcfa"/><stop offset="1" stop-color="#1a8ef0"/></linearGradient></defs><path d="M0.5 0.5 H10.3 L15.5 5.7 V19.5 H0.5 Z" fill="#fcfcfc" stroke="#707070" stroke-width="1" stroke-linejoin="round"/><path d="M10.3 0.5 V5.7 H15.5" fill="#fff" stroke="#707070" stroke-width="0.9"/><rect x="3.9" y="6.9" width="8.2" height="8.2" rx="0.6" fill="url(#ig)"/><path d="M3.9 14.2 L8.4 9.6 L12.1 13.6 V15.1 H3.9 Z" fill="url(#mg)"/><circle cx="10.4" cy="8.6" r="0.85" fill="#fff"/></svg>
<div class="t" style="left:112.50px;top:483px;font-size:14.55px;line-height:16px;">Screenshot 2025-08-03 105700.png</div>
<div class="t" style="left:387.60px;top:483px;font-size:14.55px;line-height:16px;">Program Screenshot - 255.png</div>
<div class="t" style="left:631.60px;top:483px;font-size:14.55px;line-height:16px;">C:\Users\kj\Pictures\Screenshots\</div>
<div class="t" style="left:880.20px;top:483px;font-size:14.55px;line-height:16px;">1694</div>
<div class="t" style="left:965.30px;top:483px;font-size:14.55px;line-height:16px;">1261</div>
<div class="t" style="left:1060.20px;top:483px;font-size:14.55px;line-height:16px;">OK</div>
<svg style="left:7px;top:508px" width="16" height="16" viewBox="0 0 16 16"><rect x="0" y="0" width="16" height="16" rx="3.2" fill="#005fb8"/><path d="M3.8 8.2 L6.6 11 L12.2 5.4" fill="none" stroke="#fff" stroke-width="1.1"/></svg>
<div class="t" style="left:29.50px;top:509px;font-size:14.55px;line-height:16px;">256</div>
<svg style="left:91px;top:506px" width="16" height="20" viewBox="0 0 16 20"><defs><linearGradient id="ig" x1="0" y1="0" x2="1" y2="1"><stop offset="0" stop-color="#2f80dc"/><stop offset="0.55" stop-color="#3f5fd0"/><stop offset="1" stop-color="#7a4ec8"/></linearGradient><linearGradient id="mg" x1="0" y1="0" x2="0" y2="1"><stop offset="0" stop-color="#46dcfa"/><stop offset="1" stop-color="#1a8ef0"/></linearGradient></defs><path d="M0.5 0.5 H10.3 L15.5 5.7 V19.5 H0.5 Z" fill="#fcfcfc" stroke="#707070" stroke-width="1" stroke-linejoin="round"/><path d="M10.3 0.5 V5.7 H15.5" fill="#fff" stroke="#707070" stroke-width="0.9"/><rect x="3.9" y="6.9" width="8.2" height="8.2" rx="0.6" fill="url(#ig)"/><path d="M3.9 14.2 L8.4 9.6 L12.1 13.6 V15.1 H3.9 Z" fill="url(#mg)"/><circle cx="10.4" cy="8.6" r="0.85" fill="#fff"/></svg>
<div class="t" style="left:112.50px;top:509px;font-size:14.55px;line-height:16px;">Screenshot 2025-08-12 084334.png</div>
<div class="t" style="left:387.60px;top:509px;font-size:14.55px;line-height:16px;">Program Screenshot - 256.png</div>
<div class="t" style="left:631.60px;top:509px;font-size:14.55px;line-height:16px;">C:\Users\kj\Pictures\Screenshots\</div>
<div class="t" style="left:880.20px;top:509px;font-size:14.55px;line-height:16px;">1881</div>
<div class="t" style="left:965.30px;top:509px;font-size:14.55px;line-height:16px;">1004</div>
<div class="t" style="left:1060.20px;top:509px;font-size:14.55px;line-height:16px;">OK</div>
<svg style="left:7px;top:534px" width="16" height="16" viewBox="0 0 16 16"><rect x="0" y="0" width="16" height="16" rx="3.2" fill="#005fb8"/><path d="M3.8 8.2 L6.6 11 L12.2 5.4" fill="none" stroke="#fff" stroke-width="1.1"/></svg>
<div class="t" style="left:29.50px;top:535px;font-size:14.55px;line-height:16px;">257</div>
<svg style="left:91px;top:532px" width="16" height="20" viewBox="0 0 16 20"><defs><linearGradient id="ig" x1="0" y1="0" x2="1" y2="1"><stop offset="0" stop-color="#2f80dc"/><stop offset="0.55" stop-color="#3f5fd0"/><stop offset="1" stop-color="#7a4ec8"/></linearGradient><linearGradient id="mg" x1="0" y1="0" x2="0" y2="1"><stop offset="0" stop-color="#46dcfa"/><stop offset="1" stop-color="#1a8ef0"/></linearGradient></defs><path d="M0.5 0.5 H10.3 L15.5 5.7 V19.5 H0.5 Z" fill="#fcfcfc" stroke="#707070" stroke-width="1" stroke-linejoin="round"/><path d="M10.3 0.5 V5.7 H15.5" fill="#fff" stroke="#707070" stroke-width="0.9"/><rect x="3.9" y="6.9" width="8.2" height="8.2" rx="0.6" fill="url(#ig)"/><path d="M3.9 14.2 L8.4 9.6 L12.1 13.6 V15.1 H3.9 Z" fill="url(#mg)"/><circle cx="10.4" cy="8.6" r="0.85" fill="#fff"/></svg>
<div class="t" style="left:112.50px;top:535px;font-size:14.55px;line-height:16px;">Screenshot 2025-08-12 084655.png</div>
<div class="t" style="left:387.60px;top:535px;font-size:14.55px;line-height:16px;">Program Screenshot - 257.png</div>
<div class="t" style="left:631.60px;top:535px;font-size:14.55px;line-height:16px;">C:\Users\kj\Pictures\Screenshots\</div>
<div class="t" style="left:880.20px;top:535px;font-size:14.55px;line-height:16px;">1881</div>
<div class="t" style="left:965.30px;top:535px;font-size:14.55px;line-height:16px;">1004</div>
<div class="t" style="left:1060.20px;top:535px;font-size:14.55px;line-height:16px;">OK</div>
<svg style="left:7px;top:560px" width="16" height="16" viewBox="0 0 16 16"><rect x="0" y="0" width="16" height="16" rx="3.2" fill="#005fb8"/><path d="M3.8 8.2 L6.6 11 L12.2 5.4" fill="none" stroke="#fff" stroke-width="1.1"/></svg>
<div class="t" style="left:29.50px;top:561px;font-size:14.55px;line-height:16px;">258</div>
<svg style="left:91px;top:558px" width="16" height="20" viewBox="0 0 16 20"><defs><linearGradient id="ig" x1="0" y1="0" x2="1" y2="1"><stop offset="0" stop-color="#2f80dc"/><stop offset="0.55" stop-color="#3f5fd0"/><stop offset="1" stop-color="#7a4ec8"/></linearGradient><linearGradient id="mg" x1="0" y1="0" x2="0" y2="1"><stop offset="0" stop-color="#46dcfa"/><stop offset="1" stop-color="#1a8ef0"/></linearGradient></defs><path d="M0.5 0.5 H10.3 L15.5 5.7 V19.5 H0.5 Z" fill="#fcfcfc" stroke="#707070" stroke-width="1" stroke-linejoin="round"/><path d="M10.3 0.5 V5.7 H15.5" fill="#fff" stroke="#707070" stroke-width="0.9"/><rect x="3.9" y="6.9" width="8.2" height="8.2" rx="0.6" fill="url(#ig)"/><path d="M3.9 14.2 L8.4 9.6 L12.1 13.6 V15.1 H3.9 Z" fill="url(#mg)"/><circle cx="10.4" cy="8.6" r="0.85" fill="#fff"/></svg>
<div class="t" style="left:112.50px;top:561px;font-size:14.55px;line-height:16px;">Screenshot 2025-08-28 103041.png</div>
<div class="t" style="left:387.60px;top:561px;font-size:14.55px;line-height:16px;">Program Screenshot - 258.png</div>
<div class="t" style="left:631.60px;top:561px;font-size:14.55px;line-height:16px;">C:\Users\kj\Pictures\Screenshots\</div>
<div class="t" style="left:880.20px;top:561px;font-size:14.55px;line-height:16px;">2810</div>
<div class="t" style="left:965.30px;top:561px;font-size:14.55px;line-height:16px;">1604</div>
<div class="t" style="left:1060.20px;top:561px;font-size:14.55px;line-height:16px;">OK</div>
<svg style="left:7px;top:586px" width="16" height="16" viewBox="0 0 16 16"><rect x="0" y="0" width="16" height="16" rx="3.2" fill="#005fb8"/><path d="M3.8 8.2 L6.6 11 L12.2 5.4" fill="none" stroke="#fff" stroke-width="1.1"/></svg>
<div class="t" style="left:29.50px;top:587px;font-size:14.55px;line-height:16px;">259</div>
<svg style="left:91px;top:584px" width="16" height="20" viewBox="0 0 16 20"><defs><linearGradient id="ig" x1="0" y1="0" x2="1" y2="1"><stop offset="0" stop-color="#2f80dc"/><stop offset="0.55" stop-color="#3f5fd0"/><stop offset="1" stop-color="#7a4ec8"/></linearGradient><linearGradient id="mg" x1="0" y1="0" x2="0" y2="1"><stop offset="0" stop-color="#46dcfa"/><stop offset="1" stop-color="#1a8ef0"/></linearGradient></defs><path d="M0.5 0.5 H10.3 L15.5 5.7 V19.5 H0.5 Z" fill="#fcfcfc" stroke="#707070" stroke-width="1" stroke-linejoin="round"/><path d="M10.3 0.5 V5.7 H15.5" fill="#fff" stroke="#707070" stroke-width="0.9"/><rect x="3.9" y="6.9" width="8.2" height="8.2" rx="0.6" fill="url(#ig)"/><path d="M3.9 14.2 L8.4 9.6 L12.1 13.6 V15.1 H3.9 Z" fill="url(#mg)"/><circle cx="10.4" cy="8.6" r="0.85" fill="#fff"/></svg>
<div class="t" style="left:112.50px;top:587px;font-size:14.55px;line-height:16px;">Screenshot 2025-08-28 103254.png</div>
<div class="t" style="left:387.60px;top:587px;font-size:14.55px;line-height:16px;">Program Screenshot - 259.png</div>
<div class="t" style="left:631.60px;top:587px;font-size:14.55px;line-height:16px;">C:\Users\kj\Pictures\Screenshots\</div>
<div class="t" style="left:880.20px;top:587px;font-size:14.55px;line-height:16px;">2810</div>
<div class="t" style="left:965.30px;top:587px;font-size:14.55px;line-height:16px;">1604</div>
<div class="t" style="left:1060.20px;top:587px;font-size:14.55px;line-height:16px;">OK</div>
<svg style="left:7px;top:612px" width="16" height="16" viewBox="0 0 16 16"><rect x="0" y="0" width="16" height="16" rx="3.2" fill="#005fb8"/><path d="M3.8 8.2 L6.6 11 L12.2 5.4" fill="none" stroke="#fff" stroke-width="1.1"/></svg>
<div class="t" style="left:29.50px;top:613px;font-size:14.55px;line-height:16px;">260</div>
<svg style="left:91px;top:610px" width="16" height="20" viewBox="0 0 16 20"><defs><linearGradient id="ig" x1="0" y1="0" x2="1" y2="1"><stop offset="0" stop-color="#2f80dc"/><stop offset="0.55" stop-color="#3f5fd0"/><stop offset="1" stop-color="#7a4ec8"/></linearGradient><linearGradient id="mg" x1="0" y1="0" x2="0" y2="1"><stop offset="0" stop-color="#46dcfa"/><stop offset="1" stop-color="#1a8ef0"/></linearGradient></defs><path d="M0.5 0.5 H10.3 L15.5 5.7 V19.5 H0.5 Z" fill="#fcfcfc" stroke="#707070" stroke-width="1" stroke-linejoin="round"/><path d="M10.3 0.5 V5.7 H15.5" fill="#fff" stroke="#707070" stroke-width="0.9"/><rect x="3.9" y="6.9" width="8.2" height="8.2" rx="0.6" fill="url(#ig)"/><path d="M3.9 14.2 L8.4 9.6 L12.1 13.6 V15.1 H3.9 Z" fill="url(#mg)"/><circle cx="10.4" cy="8.6" r="0.85" fill="#fff"/></svg>
<div class="t" style="left:112.50px;top:613px;font-size:14.55px;line-height:16px;">Screenshot 2025-08-28 103355.png</div>
<div class="t" style="left:387.60px;top:613px;font-size:14.55px;line-height:16px;">Program Screenshot - 260.png</div>
<div class="t" style="left:631.60px;top:613px;font-size:14.55px;line-height:16px;">C:\Users\kj\Pictures\Screenshots\</div>
<div class="t" style="left:880.20px;top:613px;font-size:14.55px;line-height:16px;">2810</div>
<div class="t" style="left:965.30px;top:613px;font-size:14.55px;line-height:16px;">1604</div>
<div class="t" style="left:1060.20px;top:613px;font-size:14.55px;line-height:16px;">OK</div>
<svg style="left:7px;top:638px" width="16" height="16" viewBox="0 0 16 16"><rect x="0" y="0" width="16" height="16" rx="3.2" fill="#005fb8"/><path d="M3.8 8.2 L6.6 11 L12.2 5.4" fill="none" stroke="#fff" stroke-width="1.1"/></svg>
<div class="t" style="left:29.50px;top:639px;font-size:14.55px;line-height:16px;">261</div>
<svg style="left:91px;top:636px" width="16" height="20" viewBox="0 0 16 20"><defs><linearGradient id="ig" x1="0" y1="0" x2="1" y2="1"><stop offset="0" stop-color="#2f80dc"/><stop offset="0.55" stop-color="#3f5fd0"/><stop offset="1" stop-color="#7a4ec8"/></linearGradient><linearGradient id="mg" x1="0" y1="0" x2="0" y2="1"><stop offset="0" stop-color="#46dcfa"/><stop offset="1" stop-color="#1a8ef0"/></linearGradient></defs><path d="M0.5 0.5 H10.3 L15.5 5.7 V19.5 H0.5 Z" fill="#fcfcfc" stroke="#707070" stroke-width="1" stroke-linejoin="round"/><path d="M10.3 0.5 V5.7 H15.5" fill="#fff" stroke="#707070" stroke-width="0.9"/><rect x="3.9" y="6.9" width="8.2" height="8.2" rx="0.6" fill="url(#ig)"/><path d="M3.9 14.2 L8.4 9.6 L12.1 13.6 V15.1 H3.9 Z" fill="url(#mg)"/><circle cx="10.4" cy="8.6" r="0.85" fill="#fff"/></svg>
<div class="t" style="left:112.50px;top:639px;font-size:14.55px;line-height:16px;">Screenshot 2025-08-28 103439.png</div>
<div class="t" style="left:387.60px;top:639px;font-size:14.55px;line-height:16px;">Program Screenshot - 261.png</div>
<div class="t" style="left:631.60px;top:639px;font-size:14.55px;line-height:16px;">C:\Users\kj\Pictures\Screenshots\</div>
<div class="t" style="left:880.20px;top:639px;font-size:14.55px;line-height:16px;">2810</div>
<div class="t" style="left:965.30px;top:639px;font-size:14.55px;line-height:16px;">1604</div>
<div class="t" style="left:1060.20px;top:639px;font-size:14.55px;line-height:16px;">OK</div>
<svg style="left:7px;top:664px" width="16" height="16" viewBox="0 0 16 16"><rect x="0" y="0" width="16" height="16" rx="3.2" fill="#005fb8"/><path d="M3.8 8.2 L6.6 11 L12.2 5.4" fill="none" stroke="#fff" stroke-width="1.1"/></svg>
<div class="t" style="left:29.50px;top:665px;font-size:14.55px;line-height:16px;">262</div>
<svg style="left:91px;top:662px" width="16" height="20" viewBox="0 0 16 20"><defs><linearGradient id="ig" x1="0" y1="0" x2="1" y2="1"><stop offset="0" stop-color="#2f80dc"/><stop offset="0.55" stop-color="#3f5fd0"/><stop offset="1" stop-color="#7a4ec8"/></linearGradient><linearGradient id="mg" x1="0" y1="0" x2="0" y2="1"><stop offset="0" stop-color="#46dcfa"/><stop offset="1" stop-color="#1a8ef0"/></linearGradient></defs><path d="M0.5 0.5 H10.3 L15.5 5.7 V19.5 H0.5 Z" fill="#fcfcfc" stroke="#707070" stroke-width="1" stroke-linejoin="round"/><path d="M10.3 0.5 V5.7 H15.5" fill="#fff" stroke="#707070" stroke-width="0.9"/><rect x="3.9" y="6.9" width="8.2" height="8.2" rx="0.6" fill="url(#ig)"/><path d="M3.9 14.2 L8.4 9.6 L12.1 13.6 V15.1 H3.9 Z" fill="url(#mg)"/><circle cx="10.4" cy="8.6" r="0.85" fill="#fff"/></svg>
<div class="t" style="left:112.50px;top:665px;font-size:14.55px;line-height:16px;">Screenshot 2025-08-28 103520.png</div>
<div class="t" style="left:387.60px;top:665px;font-size:14.55px;line-height:16px;">Program Screenshot - 262.png</div>
<div class="t" style="left:631.60px;top:665px;font-size:14.55px;line-height:16px;">C:\Users\kj\Pictures\Screenshots\</div>
<div class="t" style="left:880.20px;top:665px;font-size:14.55px;line-height:16px;">1104</div>
<div class="t" style="left:965.30px;top:665px;font-size:14.55px;line-height:16px;">968</div>
<div class="t" style="left:1060.20px;top:665px;font-size:14.55px;line-height:16px;">OK</div>
<div class="r" style="left:1px;top:685px;width:1138px;height:26px;background:#0078d7"></div>
<svg style="left:7px;top:690px" width="16" height="16" viewBox="0 0 16 16"><rect x="0" y="0" width="16" height="16" rx="3.2" fill="#0a64b4"/><path d="M3.8 8.2 L6.6 11 L12.2 5.4" fill="none" stroke="#fff" stroke-width="1.1"/></svg>
<div class="t" style="left:29.50px;top:691px;font-size:14.55px;line-height:16px;color:#fff;">263</div>
<svg style="left:91px;top:688px" width="16" height="20" viewBox="0 0 16 20"><defs><linearGradient id="ig" x1="0" y1="0" x2="1" y2="1"><stop offset="0" stop-color="#2f80dc"/><stop offset="0.55" stop-color="#3f5fd0"/><stop offset="1" stop-color="#7a4ec8"/></linearGradient><linearGradient id="mg" x1="0" y1="0" x2="0" y2="1"><stop offset="0" stop-color="#46dcfa"/><stop offset="1" stop-color="#1a8ef0"/></linearGradient></defs><path d="M0.5 0.5 H10.3 L15.5 5.7 V19.5 H0.5 Z" fill="#fcfcfc" stroke="#707070" stroke-width="1" stroke-linejoin="round"/><path d="M10.3 0.5 V5.7 H15.5" fill="#fff" stroke="#707070" stroke-width="0.9"/><rect x="3.9" y="6.9" width="8.2" height="8.2" rx="0.6" fill="url(#ig)"/><path d="M3.9 14.2 L8.4 9.6 L12.1 13.6 V15.1 H3.9 Z" fill="url(#mg)"/><circle cx="10.4" cy="8.6" r="0.85" fill="#fff"/></svg>
<div class="t" style="left:112.50px;top:691px;font-size:14.55px;line-height:16px;color:#fff;">Screenshot 2025-08-28 105920.png</div>
<div class="t" style="left:387.60px;top:691px;font-size:14.55px;line-height:16px;color:#fff;">Program Screenshot - 263.png</div>
<div class="t" style="left:631.60px;top:691px;font-size:14.55px;line-height:16px;color:#fff;">C:\Users\kj\Pictures\Screenshots\</div>
<div class="t" style="left:880.20px;top:691px;font-size:14.55px;line-height:16px;color:#fff;">2254</div>
<div class="t" style="left:965.30px;top:691px;font-size:14.55px;line-height:16px;color:#fff;">1060</div>
<div class="t" style="left:1060.20px;top:691px;font-size:14.55px;line-height:16px;color:#fff;">OK</div>
<svg style="left:7px;top:716px" width="16" height="16" viewBox="0 0 16 16"><rect x="0" y="0" width="16" height="16" rx="3.2" fill="#005fb8"/><path d="M3.8 8.2 L6.6 11 L12.2 5.4" fill="none" stroke="#fff" stroke-width="1.1"/></svg>
<div class="t" style="left:29.50px;top:717px;font-size:14.55px;line-height:16px;">264</div>
<svg style="left:91px;top:714px" width="16" height="20" viewBox="0 0 16 20"><defs><linearGradient id="ig" x1="0" y1="0" x2="1" y2="1"><stop offset="0" stop-color="#2f80dc"/><stop offset="0.55" stop-color="#3f5fd0"/><stop offset="1" stop-color="#7a4ec8"/></linearGradient><linearGradient id="mg" x1="0" y1="0" x2="0" y2="1"><stop offset="0" stop-color="#46dcfa"/><stop offset="1" stop-color="#1a8ef0"/></linearGradient></defs><path d="M0.5 0.5 H10.3 L15.5 5.7 V19.5 H0.5 Z" fill="#fcfcfc" stroke="#707070" stroke-width="1" stroke-linejoin="round"/><path d="M10.3 0.5 V5.7 H15.5" fill="#fff" stroke="#707070" stroke-width="0.9"/><rect x="3.9" y="6.9" width="8.2" height="8.2" rx="0.6" fill="url(#ig)"/><path d="M3.9 14.2 L8.4 9.6 L12.1 13.6 V15.1 H3.9 Z" fill="url(#mg)"/><circle cx="10.4" cy="8.6" r="0.85" fill="#fff"/></svg>
<div class="t" style="left:112.50px;top:717px;font-size:14.55px;line-height:16px;">Screenshot 2025-08-28 110030.png</div>
<div class="t" style="left:387.60px;top:717px;font-size:14.55px;line-height:16px;">Program Screenshot - 264.png</div>
<div class="t" style="left:631.60px;top:717px;font-size:14.55px;line-height:16px;">C:\Users\kj\Pictures\Screenshots\</div>
<div class="t" style="left:880.20px;top:717px;font-size:14.55px;line-height:16px;">2810</div>
<div class="t" style="left:965.30px;top:717px;font-size:14.55px;line-height:16px;">1604</div>
<div class="t" style="left:1060.20px;top:717px;font-size:14.55px;line-height:16px;">OK</div>
</div>
<div class="r" style="left:476px;top:267px;width:1150px;height:27px;background:#fff"></div>
<div class="r" style="left:504px;top:268px;width:1px;height:26px;background:#e5e5e5"></div>
<div class="r" style="left:564px;top:268px;width:1px;height:26px;background:#e5e5e5"></div>
<div class="r" style="left:862px;top:268px;width:1px;height:26px;background:#e5e5e5"></div>
<div class="r" style="left:1106px;top:268px;width:1px;height:26px;background:#e5e5e5"></div>
<div class="r" style="left:1355px;top:268px;width:1px;height:26px;background:#e5e5e5"></div>
<div class="r" style="left:1440px;top:268px;width:1px;height:26px;background:#e5e5e5"></div>
<div class="r" style="left:1535px;top:268px;width:1px;height:26px;background:#e5e5e5"></div>
<div class="r" style="left:1614px;top:268px;width:1px;height:26px;background:#e5e5e5"></div>
<div class="t" style="left:509.5px;top:275px;font-size:14.55px;line-height:16px;">Index</div>
<div class="t" style="left:569px;top:275px;font-size:14.55px;line-height:16px;">Filename</div>
<div class="t" style="left:867.2px;top:275px;font-size:14.55px;line-height:16px;">New Filename</div>
<div class="t" style="left:1111.2px;top:275px;font-size:14.55px;line-height:16px;">Path</div>
<div class="t" style="left:1360.2px;top:275px;font-size:14.55px;line-height:16px;">Width</div>
<div class="t" style="left:1445px;top:275px;font-size:14.55px;line-height:16px;">Height</div>
<div class="t" style="left:1540.7px;top:275px;font-size:14.55px;line-height:16px;">Error</div>
<div class="r" style="left:1626px;top:267px;width:21px;height:765px;background:#f0f0f0"></div>
<div class="r" style="left:1634px;top:930px;width:3px;height:80px;background:#868686;border-radius:2px"></div>
</body></html>
